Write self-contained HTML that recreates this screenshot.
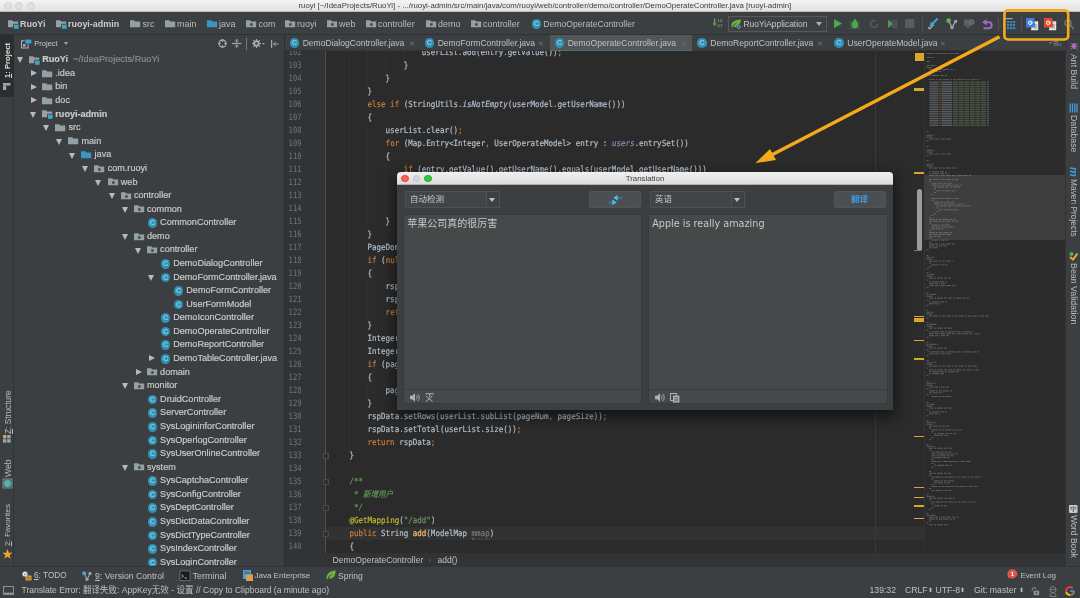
<!DOCTYPE html><html lang="zh"><head><meta charset="utf-8"><title>ruoyi</title><style>
*{box-sizing:border-box;margin:0;padding:0}
html,body{width:1080px;height:598px;overflow:hidden;background:#2b2b2b}
body{position:relative;font-family:"Liberation Sans","Noto Sans CJK SC",sans-serif;font-size:8.6px;color:#bbbbbb}
.abs,.abs>*{position:absolute}
#wrap{left:0;top:0;width:1080px;height:598px;overflow:hidden;will-change:transform}
svg{position:absolute;overflow:visible}
#title{left:0;top:0;width:1080px;height:12px;background:linear-gradient(#f4f4f4,#e2e2e2);border-bottom:1px solid #bdbdbd}
#title .tl{top:2px;width:8px;height:8px;border-radius:50%;background:#e0e0e0;border:0.5px solid #d3d3d3}
#title .t{left:298.5px;top:1px;font-size:7.82px;line-height:10px;color:#404040;white-space:nowrap}
#nav{left:0;top:12px;width:1080px;height:23px;background:#3c3f41;border-bottom:1px solid #2f3133}
.nv{top:5px;height:14px;line-height:14px;font-size:8.95px;color:#bbbbbb;white-space:nowrap}
.nv b{color:#cccccc}
#lstrip{left:0;top:35px;width:14px;height:531px;background:#3c3f41;border-right:1px solid #323435}
#rstrip{left:1065px;top:35px;width:15px;height:531px;background:#3c3f41;border-left:1px solid #323435}
.vt{white-space:nowrap;color:#bbbbbb;transform-origin:0 0;line-height:10px}
#proj{left:14px;top:35px;width:271px;height:531px;background:#3c3f41;border-right:1px solid #2b2d2e;overflow:hidden}
.row{left:0;height:13.58px;line-height:13.58px;font-size:9.08px;white-space:nowrap;color:#cacaca}
.row>*{position:absolute}
.row .t{top:0;-webkit-text-stroke:0.18px}
.row .g{color:#8c8c8c;margin-left:2.5px;letter-spacing:0.05px}
.ard{width:0;height:0;border-left:3.6px solid transparent;border-right:3.6px solid transparent;border-top:6.2px solid #b9b9b9}
.arr_r{width:0;height:0;border-top:3.6px solid transparent;border-bottom:3.6px solid transparent;border-left:6.2px solid #b9b9b9}
.cic{width:9.6px;height:9.6px;border-radius:50%;background:#3291b4;color:#86d0ea;font-size:7.4px;line-height:9.8px;text-align:center;font-weight:bold}
#tabs{left:285px;top:35px;width:780px;height:16px;background:#3c3f41;border-bottom:1px solid #323435}
.tab{top:0;height:15.5px;line-height:16px;font-size:8.55px;color:#c0c0c0;white-space:nowrap}
.tab>*{position:absolute}
.tab.act{background:#515658;border-bottom:1px solid #4c6f7a}
.tab .x{color:#6f7274;font-size:7px;top:0.5px}
#editor{left:285px;top:51px;width:780px;height:502px;background:#2b2b2b;overflow:hidden}
#gutter{left:0;top:0;width:41px;height:502px;background:#313335;border-right:1px solid #4f5254}
.ln{left:3.6px;font-family:"DejaVu Sans Mono","Liberation Mono","Noto Sans CJK SC",monospace;font-size:7.15px;color:#73777a;height:13px;line-height:13px;transform:scaleY(1.22);transform-origin:0 55%}
.cl{left:46.3px;font-family:"DejaVu Sans Mono","Liberation Mono","Noto Sans CJK SC",monospace;font-size:7.52px;color:#b4c0cc;height:13px;line-height:13px;white-space:pre;-webkit-text-stroke:0.15px;transform:scaleY(1.12);transform-origin:0 55%}
.k{color:#d07f37}.m{color:#ffc66d}.a{color:#c4bd31}.s{color:#75966a}.c{color:#629755;font-style:italic}.f{color:#a580b8;font-style:italic}.i{font-style:italic}
.p{color:#7c7c7c;border-bottom:0.6px dotted #5a5a5a}
#crumbs{left:285px;top:552.6px;width:780px;height:14px;background:#313335;font-size:8.55px;line-height:15.6px;color:#c0c0c0;white-space:nowrap}
#tools{left:0;top:566px;width:1080px;height:17px;background:#3c3f41;border-top:1px solid #323435}
.tw{top:1.5px;height:14px;line-height:14px;color:#c0c0c0;white-space:nowrap}
#status{left:0;top:583px;width:1080px;height:15px;background:#3c3f41;font-size:8.6px;line-height:15px;color:#c0c0c0;white-space:nowrap}
#dlgsh{left:397px;top:172px;width:496px;height:237.6px;border-radius:4px 4px 0 0;box-shadow:0 5px 14px 2px rgba(0,0,0,.55)}
#dlg{left:397px;top:172px;width:496px;height:237.6px;background:#3c3f41;border-radius:4px 4px 0 0;overflow:hidden}
#dtitle{left:0;top:0;width:496px;height:13px;background:linear-gradient(#f0f0f0,#dcdcdc);border-bottom:1px solid #b0b0b0}
#dtitle .tt{left:0;width:496px;top:0;text-align:center;font-size:7.9px;line-height:13.4px;color:#3c3c3c}
.dot{top:2.5px;width:7.5px;height:7.5px;border-radius:50%}
.combo{height:17.3px;background:#414547;border:1px solid #4d5153;font-size:8.5px;line-height:15.3px;color:#c8c8c8;white-space:nowrap}
.combo>*{position:absolute}
.btn{height:17.3px;border-radius:2px;background:#4b4f51;border:1px solid #505456;font-size:8.5px;line-height:15.3px;color:#3d9be4;text-align:center;font-weight:bold}
.ta{background:#45494a;border:1px solid #383b3d;color:#c8c8c8;white-space:nowrap}
.ta>*{position:absolute}
</style></head><body><div id="wrap" class="abs">
<div id="title" class="abs">
<div class="tl" style="left:4px"></div>
<div class="tl" style="left:15px"></div>
<div class="tl" style="left:26.5px"></div>
<div class="t">ruoyi [~/IdeaProjects/RuoYi] - .../ruoyi-admin/src/main/java/com/ruoyi/web/controller/demo/controller/DemoOperateController.java [ruoyi-admin]</div>
</div>
<div id="nav" class="abs">
<svg style="left:7.50px;top:7.50px" width="10.6" height="9" viewBox="0 0 10.6 9"><path d="M0 0.3h4.2l1 1.2H10.2V7.3H0z" fill="#94a0a7"/><rect x="5.2" y="3.8" width="5.4" height="5" fill="#3c3f41"/><rect x="6" y="4.6" width="4.6" height="4.2" fill="#3ea4cc"/></svg>
<div class="nv" style="left:20px"><b>RuoYi</b></div>
<svg style="left:55.50px;top:7.50px" width="10.6" height="9" viewBox="0 0 10.6 9"><path d="M0 0.3h4.2l1 1.2H10.2V7.3H0z" fill="#94a0a7"/><rect x="5.2" y="3.8" width="5.4" height="5" fill="#3c3f41"/><rect x="6" y="4.6" width="4.6" height="4.2" fill="#3ea4cc"/></svg>
<div class="nv" style="left:68px"><b>ruoyi-admin</b></div>
<svg style="left:130.00px;top:7.50px" width="10.6" height="9" viewBox="0 0 10.6 9"><path d="M0 0.3h4.2l1 1.2H10.2V7.3H0z" fill="#94a0a7"/></svg>
<div class="nv" style="left:142.5px">src</div>
<svg style="left:164.50px;top:7.50px" width="10.6" height="9" viewBox="0 0 10.6 9"><path d="M0 0.3h4.2l1 1.2H10.2V7.3H0z" fill="#94a0a7"/></svg>
<div class="nv" style="left:177px">main</div>
<svg style="left:207.00px;top:7.50px" width="10.6" height="9" viewBox="0 0 10.6 9"><path d="M0 0.3h4.2l1 1.2H10.2V7.3H0z" fill="#3c93c4"/></svg>
<div class="nv" style="left:219px">java</div>
<svg style="left:246.00px;top:7.50px" width="10.6" height="9" viewBox="0 0 10.6 9"><path d="M0 0.3h4.2l1 1.2H10.2V7.3H0z" fill="#94a0a7"/><rect x="4.2" y="3.3" width="2.4" height="2.4" fill="#3c3f41"/></svg>
<div class="nv" style="left:258.5px">com</div>
<svg style="left:285.00px;top:7.50px" width="10.6" height="9" viewBox="0 0 10.6 9"><path d="M0 0.3h4.2l1 1.2H10.2V7.3H0z" fill="#94a0a7"/><rect x="4.2" y="3.3" width="2.4" height="2.4" fill="#3c3f41"/></svg>
<div class="nv" style="left:297px">ruoyi</div>
<svg style="left:326.50px;top:7.50px" width="10.6" height="9" viewBox="0 0 10.6 9"><path d="M0 0.3h4.2l1 1.2H10.2V7.3H0z" fill="#94a0a7"/><rect x="4.2" y="3.3" width="2.4" height="2.4" fill="#3c3f41"/></svg>
<div class="nv" style="left:339px">web</div>
<svg style="left:366.00px;top:7.50px" width="10.6" height="9" viewBox="0 0 10.6 9"><path d="M0 0.3h4.2l1 1.2H10.2V7.3H0z" fill="#94a0a7"/><rect x="4.2" y="3.3" width="2.4" height="2.4" fill="#3c3f41"/></svg>
<div class="nv" style="left:378px">controller</div>
<svg style="left:426.00px;top:7.50px" width="10.6" height="9" viewBox="0 0 10.6 9"><path d="M0 0.3h4.2l1 1.2H10.2V7.3H0z" fill="#94a0a7"/><rect x="4.2" y="3.3" width="2.4" height="2.4" fill="#3c3f41"/></svg>
<div class="nv" style="left:438px">demo</div>
<svg style="left:471.00px;top:7.50px" width="10.6" height="9" viewBox="0 0 10.6 9"><path d="M0 0.3h4.2l1 1.2H10.2V7.3H0z" fill="#94a0a7"/><rect x="4.2" y="3.3" width="2.4" height="2.4" fill="#3c3f41"/></svg>
<div class="nv" style="left:483px">controller</div>
<div class="cic" style="left:531.50px;top:7.00px">C</div>
<div class="nv" style="left:543.3px;font-size:8.65px">DemoOperateController</div>
<svg style="left:712.00px;top:5.50px" width="12" height="13" viewBox="0 0 12 13"><path d="M2.6 0.5v6" stroke="#57a64a" stroke-width="1.4"/><path d="M0.6 5.2l2 3 2-3z" fill="#57a64a"/><text x="5.6" y="4.4" font-size="4.4" fill="#a8a8a8" font-family="Liberation Sans,sans-serif">10</text><text x="5.6" y="9.4" font-size="4.4" fill="#a8a8a8" font-family="Liberation Sans,sans-serif">01</text></svg>
<div style="left:727.5px;top:3.8px;width:99.5px;height:16px;border:1px solid #56595b;background:#3e4143"></div>
<svg style="left:730.50px;top:6.50px" width="11" height="10" viewBox="0 0 11 10"><path d="M0.5 7C0.5 3 3.5 1 9.8 0.5 9.8 5 7 8.5 2.5 8 3.5 5.5 5.5 4 7.5 3 4.5 3.8 2.2 5.5 1.2 8.8z" fill="#6db33f"/><circle cx="7.8" cy="7.8" r="2.3" fill="#3e4143"/><circle cx="7.8" cy="7.8" r="1.6" fill="none" stroke="#7fb0d8" stroke-width="0.9"/></svg>
<div class="nv" style="left:743.5px;top:4.8px;font-size:8.45px;color:#c6c6c6">RuoYiApplication</div>
<div class="ard" style="left:815.5px;top:9.8px;border-left-width:3px;border-right-width:3px;border-top:4.2px solid #b0b0b0"></div>
<svg style="left:833.70px;top:7.30px" width="9" height="10" viewBox="0 0 9 10"><path d="M0 0L8.2 4.6 0 9.2z" fill="#49a84c"/></svg>
<svg style="left:849.50px;top:6.50px" width="11" height="11" viewBox="0 0 11 11"><ellipse cx="5" cy="5.8" rx="3.1" ry="3.8" fill="#49a84c"/><circle cx="5" cy="2" r="1.7" fill="#49a84c"/><path d="M0.3 3.5l2 1M9.7 3.5l-2 1M0 6.2h2M10 6.2h-2M0.5 9.3l2-1.2M9.5 9.3l-2-1.2" stroke="#49a84c" stroke-width="0.9"/><path d="M8.2 3.8l2.3 1.6-2.3 1.6z" fill="#3c3f41"/></svg>
<svg style="left:869.00px;top:6.80px" width="10" height="10" viewBox="0 0 10 10"><path d="M8.3 5A3.4 3.4 0 1 1 5 1.6" fill="none" stroke="#55585a" stroke-width="1.7"/><path d="M4.5 0L7.2 1.7 4.5 3.6z" fill="#55585a"/></svg>
<svg style="left:886.50px;top:6.80px" width="11" height="10" viewBox="0 0 11 10"><path d="M1 0.5L6.5 4.7 1 9z" fill="#4a9a55"/><path d="M5 0.8h5.2v8.2H5z" fill="#5b5e60" opacity=".85"/><path d="M5 2.5h5M5 4.7h5M5 6.9h5M7.5 0.8v8.2" stroke="#3c3f41" stroke-width=".5"/></svg>
<svg style="left:905.20px;top:7.00px" width="10" height="10" viewBox="0 0 10 10"><rect x="0" y="0" width="9.3" height="9" fill="#595c5e"/></svg>
<div style="left:921.5px;top:4.5px;width:1px;height:14px;background:#4e5254"></div>
<svg style="left:927.00px;top:5.50px" width="12" height="13" viewBox="0 0 12 13"><path d="M10.5 0.5L5.2 6.2" stroke="#3f9fd8" stroke-width="2.2"/><path d="M2.2 8.8L4 3.8 8 7.4z" fill="#3f9fd8"/><path d="M1 9.2l1.6 1.8L5.5 8" stroke="#b8b8b8" stroke-width="1.1" fill="none"/></svg>
<svg style="left:945.50px;top:5.50px" width="12" height="12" viewBox="0 0 12 12"><path d="M2.6 2.6L6 9.3 9.6 3.4" stroke="#b0b0b0" stroke-width="1.1" fill="none"/><circle cx="2.6" cy="2.6" r="2.3" fill="#62b543"/><circle cx="9.6" cy="3.4" r="1.7" fill="#9a9da0"/><circle cx="6" cy="9.6" r="1.8" fill="#9a9da0"/></svg>
<svg style="left:963.50px;top:6.50px" width="11" height="11" viewBox="0 0 11 11"><rect x="0" y="0.5" width="8" height="6.3" fill="#5c5f61"/><rect x="2.5" y="7.2" width="3" height="1.8" fill="#5c5f61"/><circle cx="7.8" cy="3" r="2.8" fill="#6a6d6f"/><path d="M7.8 1.6v1.6h1.3" stroke="#3c3f41" stroke-width=".7" fill="none"/></svg>
<svg style="left:981.50px;top:6.50px" width="11" height="11" viewBox="0 0 11 11"><path d="M3.5 3.3h3.2a3 3 0 0 1 0 6H1.5" fill="none" stroke="#9a6bc7" stroke-width="1.9"/><path d="M4.6 0L0.2 3.3 4.6 6.6z" fill="#9a6bc7"/></svg>
<div style="left:998px;top:4.5px;width:1px;height:14px;background:#4e5254"></div>
<svg style="left:1004.00px;top:5.50px" width="12" height="12" viewBox="0 0 12 12"><path d="M0.6 8.5V0.6h8" stroke="#9aa0a4" stroke-width="1.1" fill="none"/><rect x="2.6" y="2.6" width="8.8" height="8.8" fill="#3c3f41"/><g fill="#3b86b8"><rect x="3" y="3" width="2.2" height="2.2"/><rect x="6" y="3" width="2.2" height="2.2"/><rect x="9" y="3" width="2.2" height="2.2"/><rect x="3" y="6" width="2.2" height="2.2"/><rect x="6" y="6" width="2.2" height="2.2"/><rect x="9" y="6" width="2.2" height="2.2"/><rect x="3" y="9" width="2.2" height="2.2"/><rect x="6" y="9" width="2.2" height="2.2"/><rect x="9" y="9" width="2.2" height="2.2"/></g></svg>
<div style="left:1021px;top:4.5px;width:1px;height:14px;background:#4e5254"></div>
<svg style="left:1026.00px;top:5.60px" width="12.5" height="12.5" viewBox="0 0 12.5 12.5"><path d="M6 3.2h6.2v9H5z" fill="#e6e6e6"/><path d="M8.2 7h3M9.7 6v1M8.4 10.8c1.2-.6 2-1.8 2.2-3.4M8.6 8.4c.5 1 1.3 1.8 2.4 2.2" stroke="#8a8a8a" stroke-width=".6" fill="none"/><path d="M0.8 0h7.4l1.2 9.6H0.8a.8.8 0 0 1-.8-.8V.8A.8.8 0 0 1 .8 0z" fill="#3f7fe0"/><circle cx="4.3" cy="4.8" r="1.8" fill="none" stroke="#ffffff" stroke-width="1"/><path d="M4.3 4.8h2" stroke="#fff" stroke-width=".9"/></svg>
<svg style="left:1044.30px;top:5.60px" width="12.5" height="12.5" viewBox="0 0 12.5 12.5"><path d="M6 3.2h6.2v9H5z" fill="#e6e6e6"/><path d="M8.2 7h3M9.7 6v1M8.4 10.8c1.2-.6 2-1.8 2.2-3.4M8.6 8.4c.5 1 1.3 1.8 2.4 2.2" stroke="#8a8a8a" stroke-width=".6" fill="none"/><path d="M0.8 0h7.4l1.2 9.6H0.8a.8.8 0 0 1-.8-.8V.8A.8.8 0 0 1 .8 0z" fill="#e8492e"/><circle cx="4.3" cy="4.8" r="1.8" fill="none" stroke="#ffffff" stroke-width="1"/><path d="M4.3 4.8h2" stroke="#fff" stroke-width=".9"/></svg>
<svg style="left:1063.50px;top:6.50px" width="11" height="11" viewBox="0 0 11 11"><circle cx="4" cy="4" r="3" fill="none" stroke="#6e7173" stroke-width="1.5"/><path d="M6.2 6.2l3.6 3.6" stroke="#6e7173" stroke-width="1.8"/></svg>
</div>
<div id="lstrip" class="abs">
<div style="left:0;top:0;width:13.5px;height:61.5px;background:#2b2d2e"></div>
<div class="vt" style="left:2.6px;top:43px;transform:rotate(-90deg);color:#dcdcdc;font-size:7.7px;font-weight:bold"><u>1</u>: Project</div>
<svg style="left:3.00px;top:48.00px" width="8" height="8" viewBox="0 0 8 8"><rect x="0" y="0" width="7.5" height="2.5" fill="#9aa7b0"/><rect x="0" y="2.5" width="3.2" height="4.5" fill="#9aa7b0"/></svg>
<div class="vt" style="left:2.6px;top:399px;transform:rotate(-90deg);font-size:8.36px"><u>Z</u>: Structure</div>
<svg style="left:2.70px;top:400.00px" width="8" height="8" viewBox="0 0 8 8"><rect x="0" y="0" width="3.4" height="3.4" fill="#d6a544"/><rect x="4.2" y="0" width="3.4" height="3.4" fill="#9aa7b0"/><rect x="0" y="4.2" width="3.4" height="3.4" fill="#9aa7b0"/><rect x="4.2" y="4.2" width="3.4" height="3.4" fill="#9aa7b0"/></svg>
<div class="vt" style="left:2.6px;top:441.5px;transform:rotate(-90deg);font-size:8.6px">Web</div>
<svg style="left:2.50px;top:443.50px" width="9" height="9" viewBox="0 0 9 9"><circle cx="4.5" cy="4.5" r="4" fill="#4a9fd6"/><path d="M2 3c1.5-1.5 4-1 4.5.8S4.5 6 3.5 7.5" fill="#6dbb4a"/><rect x="0" y="0" width="9" height="9" fill="none" stroke="#8d9aa2" stroke-width=".8"/></svg>
<div class="vt" style="left:2.6px;top:510.5px;transform:rotate(-90deg);font-size:8.05px"><u>2</u>: Favorites</div>
<div style="left:2px;top:511.5px;font-size:11px;line-height:14px;color:#f4a62c">★</div>
</div>
<div id="rstrip" class="abs">
<div class="vt" style="left:12.6px;top:18.8px;transform:rotate(90deg);font-size:8.75px">Ant Build</div>
<div class="vt" style="left:12.6px;top:79.9px;transform:rotate(90deg);font-size:8.75px">Database</div>
<div class="vt" style="left:12.6px;top:143.6px;transform:rotate(90deg);font-size:8.4px">Maven Projects</div>
<div class="vt" style="left:12.6px;top:227.6px;transform:rotate(90deg);font-size:8.85px">Bean Validation</div>
<div class="vt" style="left:12.6px;top:480px;transform:rotate(90deg);font-size:8.7px">Word Book</div>
<svg style="left:3.50px;top:6.00px" width="8" height="9" viewBox="0 0 8 9"><ellipse cx="4" cy="5" rx="2" ry="3" fill="#b06bb8"/><path d="M0.5 2.5l2 1.5M7.5 2.5l-2 1.5M0 5.5h2M8 5.5H6M0.5 8.5l2-1.5M7.5 8.5l-2-1.5" stroke="#b06bb8" stroke-width=".8"/></svg>
<svg style="left:3.00px;top:67.50px" width="9" height="10" viewBox="0 0 9 10"><g fill="none" stroke="#3f9ed8" stroke-width="1.3"><path d="M1.2 0.5v9M3.5 0.5v9M5.8 0.5v9M8 0.5v9"/></g></svg>
<div style="left:2.5px;top:130.5px;font-size:11px;line-height:12px;color:#3f9ed8;font-style:italic;font-weight:bold;transform:rotate(90deg);transform-origin:50%% 50%%">m</div>
<svg style="left:3.00px;top:216.00px" width="9" height="9" viewBox="0 0 9 9"><path d="M1 6l3 2.5 4.5-6" stroke="#e8a93a" stroke-width="2" fill="none"/><circle cx="2.5" cy="3" r="2" fill="#59b04e"/></svg>
<svg style="left:3.20px;top:470.00px" width="8.5" height="8" viewBox="0 0 8.5 8"><rect x="0" y="0" width="8.5" height="8" rx="1" fill="#c9ced2"/><path d="M4.25 0.8v6.4M1.3 2.4h1.8M1.3 4h1.8M5.4 2.4h1.8M5.4 4h1.8" stroke="#3c3f41" stroke-width=".8"/></svg>
</div>
<div id="proj" class="abs">
<svg style="left:7.00px;top:3.50px" width="11" height="10" viewBox="0 0 11 10"><rect x="0.5" y="1.8" width="6.6" height="7.2" fill="none" stroke="#aeb6bb" stroke-width="1"/><rect x="3.6" y="0" width="7" height="5.2" fill="#3c3f41"/><rect x="4.4" y="0.6" width="6" height="4" fill="#3f9ed8"/><rect x="2" y="5.2" width="2.6" height="2.4" fill="#aeb6bb"/></svg>
<div class="nv" style="left:20.3px;top:1.6px;font-size:7.5px;color:#c6c6c6">Project</div>
<div class="ard" style="left:50px;top:7px;border-left-width:2.6px;border-right-width:2.6px;border-top:3.6px solid #a8a8a8"></div>
<svg style="left:203.50px;top:4.00px" width="9" height="9" viewBox="0 0 9 9"><circle cx="4.5" cy="4.5" r="3.5" fill="none" stroke="#a4a8aa" stroke-width="1.3"/><path d="M4.5 0v3M4.5 6v3M0 4.5h3M6 4.5h3" stroke="#a4a8aa" stroke-width="1.1"/></svg>
<svg style="left:218.00px;top:4.00px" width="10" height="9" viewBox="0 0 10 9"><path d="M0 4.5h9.4" stroke="#a4a8aa" stroke-width="1.2"/><path d="M4.7 0v2.8M4.7 6.2V9M3 1.5l1.7 1.7 1.7-1.7M3 7.5l1.7-1.7 1.7 1.7" stroke="#a4a8aa" stroke-width="1" fill="none"/></svg>
<div style="left:232.3px;top:2.5px;width:1.2px;height:12px;background:#76797b"></div>
<svg style="left:237.50px;top:4.00px" width="13" height="9" viewBox="0 0 13 9"><circle cx="4.5" cy="4.5" r="2.3" fill="none" stroke="#a4a8aa" stroke-width="2"/><path d="M4.5 0v9M0 4.5h9M1.3 1.3l6.4 6.4M7.7 1.3L1.3 7.7" stroke="#a4a8aa" stroke-width="1.2"/><circle cx="4.5" cy="4.5" r="1.2" fill="#3c3f41"/><path d="M10 4h3l-1.5 1.8z" fill="#a4a8aa"/></svg>
<svg style="left:256.50px;top:4.50px" width="8" height="8" viewBox="0 0 8 8"><path d="M0.6 0v8" stroke="#a4a8aa" stroke-width="1.2"/><path d="M2.5 4h5M4.6 2L2.5 4l2.1 2" stroke="#a4a8aa" stroke-width="1" fill="none"/></svg>
<div class="row" style="top:18.30px">
<div class="ard" style="left:2.8px;top:4.2px"></div>
<svg style="left:14.90px;top:2.70px" width="10.6" height="9" viewBox="0 0 10.6 9"><path d="M0 0.3h4.2l1 1.2H10.2V7.3H0z" fill="#94a0a7"/><rect x="5.2" y="3.8" width="5.4" height="5" fill="#3c3f41"/><rect x="6" y="4.6" width="4.6" height="4.2" fill="#3ea4cc"/></svg>
<span class="t" style="left:28.2px"><b>RuoYi</b> <span class="g">~/IdeaProjects/RuoYi</span></span></div>
<div class="row" style="top:31.88px">
<div class="arr_r" style="left:16.9px;top:3.2px"></div>
<svg style="left:28.00px;top:2.70px" width="10.6" height="9" viewBox="0 0 10.6 9"><path d="M0 0.3h4.2l1 1.2H10.2V7.3H0z" fill="#94a0a7"/></svg>
<span class="t" style="left:41.3px">.idea</span></div>
<div class="row" style="top:45.46px">
<div class="arr_r" style="left:16.9px;top:3.2px"></div>
<svg style="left:28.00px;top:2.70px" width="10.6" height="9" viewBox="0 0 10.6 9"><path d="M0 0.3h4.2l1 1.2H10.2V7.3H0z" fill="#94a0a7"/></svg>
<span class="t" style="left:41.3px">bin</span></div>
<div class="row" style="top:59.04px">
<div class="arr_r" style="left:16.9px;top:3.2px"></div>
<svg style="left:28.00px;top:2.70px" width="10.6" height="9" viewBox="0 0 10.6 9"><path d="M0 0.3h4.2l1 1.2H10.2V7.3H0z" fill="#94a0a7"/></svg>
<span class="t" style="left:41.3px">doc</span></div>
<div class="row" style="top:72.62px">
<div class="ard" style="left:15.9px;top:4.2px"></div>
<svg style="left:28.00px;top:2.70px" width="10.6" height="9" viewBox="0 0 10.6 9"><path d="M0 0.3h4.2l1 1.2H10.2V7.3H0z" fill="#94a0a7"/><rect x="5.2" y="3.8" width="5.4" height="5" fill="#3c3f41"/><rect x="6" y="4.6" width="4.6" height="4.2" fill="#3ea4cc"/></svg>
<span class="t" style="left:41.3px"><b>ruoyi-admin</b></span></div>
<div class="row" style="top:86.20px">
<div class="ard" style="left:29.0px;top:4.2px"></div>
<svg style="left:41.10px;top:2.70px" width="10.6" height="9" viewBox="0 0 10.6 9"><path d="M0 0.3h4.2l1 1.2H10.2V7.3H0z" fill="#94a0a7"/></svg>
<span class="t" style="left:54.4px">src</span></div>
<div class="row" style="top:99.78px">
<div class="ard" style="left:42.1px;top:4.2px"></div>
<svg style="left:54.20px;top:2.70px" width="10.6" height="9" viewBox="0 0 10.6 9"><path d="M0 0.3h4.2l1 1.2H10.2V7.3H0z" fill="#94a0a7"/></svg>
<span class="t" style="left:67.5px">main</span></div>
<div class="row" style="top:113.36px">
<div class="ard" style="left:55.2px;top:4.2px"></div>
<svg style="left:67.30px;top:2.70px" width="10.6" height="9" viewBox="0 0 10.6 9"><path d="M0 0.3h4.2l1 1.2H10.2V7.3H0z" fill="#3c93c4"/></svg>
<span class="t" style="left:80.6px">java</span></div>
<div class="row" style="top:126.94px">
<div class="ard" style="left:68.3px;top:4.2px"></div>
<svg style="left:80.40px;top:2.70px" width="10.6" height="9" viewBox="0 0 10.6 9"><path d="M0 0.3h4.2l1 1.2H10.2V7.3H0z" fill="#94a0a7"/><rect x="4.2" y="3.3" width="2.4" height="2.4" fill="#3c3f41"/></svg>
<span class="t" style="left:93.7px">com.ruoyi</span></div>
<div class="row" style="top:140.52px">
<div class="ard" style="left:81.4px;top:4.2px"></div>
<svg style="left:93.50px;top:2.70px" width="10.6" height="9" viewBox="0 0 10.6 9"><path d="M0 0.3h4.2l1 1.2H10.2V7.3H0z" fill="#94a0a7"/><rect x="4.2" y="3.3" width="2.4" height="2.4" fill="#3c3f41"/></svg>
<span class="t" style="left:106.8px">web</span></div>
<div class="row" style="top:154.10px">
<div class="ard" style="left:94.5px;top:4.2px"></div>
<svg style="left:106.60px;top:2.70px" width="10.6" height="9" viewBox="0 0 10.6 9"><path d="M0 0.3h4.2l1 1.2H10.2V7.3H0z" fill="#94a0a7"/><rect x="4.2" y="3.3" width="2.4" height="2.4" fill="#3c3f41"/></svg>
<span class="t" style="left:119.9px">controller</span></div>
<div class="row" style="top:167.68px">
<div class="ard" style="left:107.6px;top:4.2px"></div>
<svg style="left:119.70px;top:2.70px" width="10.6" height="9" viewBox="0 0 10.6 9"><path d="M0 0.3h4.2l1 1.2H10.2V7.3H0z" fill="#94a0a7"/><rect x="4.2" y="3.3" width="2.4" height="2.4" fill="#3c3f41"/></svg>
<span class="t" style="left:133.0px">common</span></div>
<div class="row" style="top:181.26px">
<div class="cic" style="left:133.70px;top:2.00px">C</div>
<span class="t" style="left:146.1px">CommonController</span></div>
<div class="row" style="top:194.84px">
<div class="ard" style="left:107.6px;top:4.2px"></div>
<svg style="left:119.70px;top:2.70px" width="10.6" height="9" viewBox="0 0 10.6 9"><path d="M0 0.3h4.2l1 1.2H10.2V7.3H0z" fill="#94a0a7"/><rect x="4.2" y="3.3" width="2.4" height="2.4" fill="#3c3f41"/></svg>
<span class="t" style="left:133.0px">demo</span></div>
<div class="row" style="top:208.42px">
<div class="ard" style="left:120.7px;top:4.2px"></div>
<svg style="left:132.80px;top:2.70px" width="10.6" height="9" viewBox="0 0 10.6 9"><path d="M0 0.3h4.2l1 1.2H10.2V7.3H0z" fill="#94a0a7"/><rect x="4.2" y="3.3" width="2.4" height="2.4" fill="#3c3f41"/></svg>
<span class="t" style="left:146.1px">controller</span></div>
<div class="row" style="top:222.00px">
<div class="cic" style="left:146.80px;top:2.00px">C</div>
<span class="t" style="left:159.2px">DemoDialogController</span></div>
<div class="row" style="top:235.58px">
<div class="ard" style="left:133.8px;top:4.2px"></div>
<div class="cic" style="left:146.80px;top:2.00px">C</div>
<span class="t" style="left:159.2px">DemoFormController.java</span></div>
<div class="row" style="top:249.16px">
<div class="cic" style="left:159.90px;top:2.00px">C</div>
<span class="t" style="left:172.3px">DemoFormController</span></div>
<div class="row" style="top:262.74px">
<div class="cic" style="left:159.90px;top:2.00px">C</div>
<span class="t" style="left:172.3px">UserFormModel</span></div>
<div class="row" style="top:276.32px">
<div class="cic" style="left:146.80px;top:2.00px">C</div>
<span class="t" style="left:159.2px">DemoIconController</span></div>
<div class="row" style="top:289.90px">
<div class="cic" style="left:146.80px;top:2.00px">C</div>
<span class="t" style="left:159.2px">DemoOperateController</span></div>
<div class="row" style="top:303.48px">
<div class="cic" style="left:146.80px;top:2.00px">C</div>
<span class="t" style="left:159.2px">DemoReportController</span></div>
<div class="row" style="top:317.06px">
<div class="arr_r" style="left:134.8px;top:3.2px"></div>
<div class="cic" style="left:146.80px;top:2.00px">C</div>
<span class="t" style="left:159.2px">DemoTableController.java</span></div>
<div class="row" style="top:330.64px">
<div class="arr_r" style="left:121.7px;top:3.2px"></div>
<svg style="left:132.80px;top:2.70px" width="10.6" height="9" viewBox="0 0 10.6 9"><path d="M0 0.3h4.2l1 1.2H10.2V7.3H0z" fill="#94a0a7"/><rect x="4.2" y="3.3" width="2.4" height="2.4" fill="#3c3f41"/></svg>
<span class="t" style="left:146.1px">domain</span></div>
<div class="row" style="top:344.22px">
<div class="ard" style="left:107.6px;top:4.2px"></div>
<svg style="left:119.70px;top:2.70px" width="10.6" height="9" viewBox="0 0 10.6 9"><path d="M0 0.3h4.2l1 1.2H10.2V7.3H0z" fill="#94a0a7"/><rect x="4.2" y="3.3" width="2.4" height="2.4" fill="#3c3f41"/></svg>
<span class="t" style="left:133.0px">monitor</span></div>
<div class="row" style="top:357.80px">
<div class="cic" style="left:133.70px;top:2.00px">C</div>
<span class="t" style="left:146.1px">DruidController</span></div>
<div class="row" style="top:371.38px">
<div class="cic" style="left:133.70px;top:2.00px">C</div>
<span class="t" style="left:146.1px">ServerController</span></div>
<div class="row" style="top:384.96px">
<div class="cic" style="left:133.70px;top:2.00px">C</div>
<span class="t" style="left:146.1px">SysLogininforController</span></div>
<div class="row" style="top:398.54px">
<div class="cic" style="left:133.70px;top:2.00px">C</div>
<span class="t" style="left:146.1px">SysOperlogController</span></div>
<div class="row" style="top:412.12px">
<div class="cic" style="left:133.70px;top:2.00px">C</div>
<span class="t" style="left:146.1px">SysUserOnlineController</span></div>
<div class="row" style="top:425.70px">
<div class="ard" style="left:107.6px;top:4.2px"></div>
<svg style="left:119.70px;top:2.70px" width="10.6" height="9" viewBox="0 0 10.6 9"><path d="M0 0.3h4.2l1 1.2H10.2V7.3H0z" fill="#94a0a7"/><rect x="4.2" y="3.3" width="2.4" height="2.4" fill="#3c3f41"/></svg>
<span class="t" style="left:133.0px">system</span></div>
<div class="row" style="top:439.28px">
<div class="cic" style="left:133.70px;top:2.00px">C</div>
<span class="t" style="left:146.1px">SysCaptchaController</span></div>
<div class="row" style="top:452.86px">
<div class="cic" style="left:133.70px;top:2.00px">C</div>
<span class="t" style="left:146.1px">SysConfigController</span></div>
<div class="row" style="top:466.44px">
<div class="cic" style="left:133.70px;top:2.00px">C</div>
<span class="t" style="left:146.1px">SysDeptController</span></div>
<div class="row" style="top:480.02px">
<div class="cic" style="left:133.70px;top:2.00px">C</div>
<span class="t" style="left:146.1px">SysDictDataController</span></div>
<div class="row" style="top:493.60px">
<div class="cic" style="left:133.70px;top:2.00px">C</div>
<span class="t" style="left:146.1px">SysDictTypeController</span></div>
<div class="row" style="top:507.18px">
<div class="cic" style="left:133.70px;top:2.00px">C</div>
<span class="t" style="left:146.1px">SysIndexController</span></div>
<div class="row" style="top:520.76px">
<div class="cic" style="left:133.70px;top:2.00px">C</div>
<span class="t" style="left:146.1px">SysLoginController</span></div>
</div>
<div id="tabs" class="abs">
<div class="tab" style="left:0px;width:134px"><div class="cic" style="left:4.60px;top:3.20px">C</div><span style="left:17.7px">DemoDialogController.java</span><span class="x" style="left:124.2px">✕</span></div>
<div class="tab" style="left:135px;width:129px"><div class="cic" style="left:4.60px;top:3.20px">C</div><span style="left:17.7px">DemoFormController.java</span><span class="x" style="left:118.3px">✕</span></div>
<div class="tab act" style="left:265px;width:142px"><div class="cic" style="left:4.60px;top:3.20px">C</div><span style="left:17.7px">DemoOperateController.java</span><span class="x" style="left:131.3px">✕</span></div>
<div class="tab" style="left:407.6px;width:134px"><div class="cic" style="left:4.60px;top:3.20px">C</div><span style="left:17.7px">DemoReportController.java</span><span class="x" style="left:124.7px">✕</span></div>
<div class="tab" style="left:544.6px;width:122px"><div class="cic" style="left:4.60px;top:3.20px">C</div><span style="left:17.7px">UserOperateModel.java</span><span class="x" style="left:110.2px">✕</span></div>
<svg style="left:764.00px;top:5.50px" width="12" height="6" viewBox="0 0 12 6"><path d="M0 1.2h3L1.5 3z" fill="#8a8d8f"/><path d="M4.5 0.5h5M4.5 2.3h5M4.5 4.1h5" stroke="#8a8d8f" stroke-width=".8"/><text x="10" y="5" font-size="4" fill="#8a8d8f" font-family="Liberation Sans,sans-serif">4</text></svg>
</div>
<div id="editor" class="abs">
<div id="gutter"></div>
<div style="left:42px;top:476.25px;width:596.5px;height:13.00px;background:#323232"></div>
<div style="left:589.5px;top:0;width:1px;height:502px;background:#383838"></div>
<div style="left:64.3px;top:0.00px;width:1px;height:403.00px;background:#313131"></div>
<div style="left:82.3px;top:0.00px;width:1px;height:39.00px;background:#313131"></div>
<div style="left:100.3px;top:0.00px;width:1px;height:26.00px;background:#313131"></div>
<div style="left:118.3px;top:0.00px;width:1px;height:13.00px;background:#313131"></div>
<div style="left:82.3px;top:73.25px;width:1px;height:104.00px;background:#313131"></div>
<div style="left:100.3px;top:112.25px;width:1px;height:52.00px;background:#313131"></div>
<div style="left:118.3px;top:138.25px;width:1px;height:13.00px;background:#313131"></div>
<div style="left:82.3px;top:229.25px;width:1px;height:39.00px;background:#313131"></div>
<div style="left:82.3px;top:333.25px;width:1px;height:13.00px;background:#313131"></div>
<div style="left:37.5px;top:401.75px;width:6px;height:6px;border:1px solid #46494b;background:#2e3032"></div>
<div style="left:37.5px;top:427.75px;width:6px;height:6px;border:1px solid #46494b;background:#2e3032"></div>
<div style="left:37.5px;top:453.75px;width:6px;height:6px;border:1px solid #46494b;background:#2e3032"></div>
<div style="left:37.5px;top:479.75px;width:6px;height:6px;border:1px solid #46494b;background:#2e3032"></div>
<div class="ln" style="top:-4.75px">102</div>
<div class="cl" style="top:-4.75px">                    userList.add(entry.getValue())<span class="k">;</span></div>
<div class="ln" style="top:8.25px">103</div>
<div class="cl" style="top:8.25px">                }</div>
<div class="ln" style="top:21.25px">104</div>
<div class="cl" style="top:21.25px">            }</div>
<div class="ln" style="top:34.25px">105</div>
<div class="cl" style="top:34.25px">        }</div>
<div class="ln" style="top:47.25px">106</div>
<div class="cl" style="top:47.25px">        <span class="k">else if</span> (StringUtils.<span class="i">isNotEmpty</span>(userModel.getUserName()))</div>
<div class="ln" style="top:60.25px">107</div>
<div class="cl" style="top:60.25px">        {</div>
<div class="ln" style="top:73.25px">108</div>
<div class="cl" style="top:73.25px">            userList.clear()<span class="k">;</span></div>
<div class="ln" style="top:86.25px">109</div>
<div class="cl" style="top:86.25px">            <span class="k">for</span> (Map.Entry&lt;Integer<span class="k">,</span> UserOperateModel&gt; entry : <span class="f">users</span>.entrySet())</div>
<div class="ln" style="top:99.25px">110</div>
<div class="cl" style="top:99.25px">            {</div>
<div class="ln" style="top:112.25px">111</div>
<div class="cl" style="top:112.25px">                <span class="k">if</span> (entry.getValue().getUserName().equals(userModel.getUserName()))</div>
<div class="ln" style="top:125.25px">112</div>
<div class="cl" style="top:125.25px">                {</div>
<div class="ln" style="top:138.25px">113</div>
<div class="cl" style="top:138.25px">                    userList.add(entry.getValue())<span class="k">;</span></div>
<div class="ln" style="top:151.25px">114</div>
<div class="cl" style="top:151.25px">                }</div>
<div class="ln" style="top:164.25px">115</div>
<div class="cl" style="top:164.25px">            }</div>
<div class="ln" style="top:177.25px">116</div>
<div class="cl" style="top:177.25px">        }</div>
<div class="ln" style="top:190.25px">117</div>
<div class="cl" style="top:190.25px">        PageDomain pageDomain = TableSupport.buildPageRequest()<span class="k">;</span></div>
<div class="ln" style="top:203.25px">118</div>
<div class="cl" style="top:203.25px">        <span class="k">if</span> (<span class="k">null</span> == pageDomain.getPageNum() || <span class="k">null</span> == pageDomain.getPageSize())</div>
<div class="ln" style="top:216.25px">119</div>
<div class="cl" style="top:216.25px">        {</div>
<div class="ln" style="top:229.25px">120</div>
<div class="cl" style="top:229.25px">            rspData.setRows(userList)<span class="k">;</span></div>
<div class="ln" style="top:242.25px">121</div>
<div class="cl" style="top:242.25px">            rspData.setTotal(userList.size())<span class="k">;</span></div>
<div class="ln" style="top:255.25px">122</div>
<div class="cl" style="top:255.25px">            <span class="k">return</span> rspData<span class="k">;</span></div>
<div class="ln" style="top:268.25px">123</div>
<div class="cl" style="top:268.25px">        }</div>
<div class="ln" style="top:281.25px">124</div>
<div class="cl" style="top:281.25px">        Integer pageNum = (pageDomain.getPageNum() - 1) * 10<span class="k">;</span></div>
<div class="ln" style="top:294.25px">125</div>
<div class="cl" style="top:294.25px">        Integer pageSize = pageDomain.getPageNum() * 10<span class="k">;</span></div>
<div class="ln" style="top:307.25px">126</div>
<div class="cl" style="top:307.25px">        <span class="k">if</span> (pageSize &gt; userList.size())</div>
<div class="ln" style="top:320.25px">127</div>
<div class="cl" style="top:320.25px">        {</div>
<div class="ln" style="top:333.25px">128</div>
<div class="cl" style="top:333.25px">            pageSize = userList.size()<span class="k">;</span></div>
<div class="ln" style="top:346.25px">129</div>
<div class="cl" style="top:346.25px">        }</div>
<div class="ln" style="top:359.25px">130</div>
<div class="cl" style="top:359.25px">        rspData.setRows(userList.subList(pageNum<span class="k">,</span> pageSize))<span class="k">;</span></div>
<div class="ln" style="top:372.25px">131</div>
<div class="cl" style="top:372.25px">        rspData.setTotal(userList.size())<span class="k">;</span></div>
<div class="ln" style="top:385.25px">132</div>
<div class="cl" style="top:385.25px">        <span class="k">return</span> rspData<span class="k">;</span></div>
<div class="ln" style="top:398.25px">133</div>
<div class="cl" style="top:398.25px">    }</div>
<div class="ln" style="top:411.25px">134</div>
<div class="cl" style="top:411.25px"></div>
<div class="ln" style="top:424.25px">135</div>
<div class="cl" style="top:424.25px">    <span class="c">/**</span></div>
<div class="ln" style="top:437.25px">136</div>
<div class="cl" style="top:437.25px">    <span class="c"> * 新增用户</span></div>
<div class="ln" style="top:450.25px">137</div>
<div class="cl" style="top:450.25px">    <span class="c"> */</span></div>
<div class="ln" style="top:463.25px">138</div>
<div class="cl" style="top:463.25px">    <span class="a">@GetMapping</span>(<span class="s">"/add"</span>)</div>
<div class="ln" style="top:476.25px">139</div>
<div class="cl" style="top:476.25px">    <span class="k">public</span> String <span class="m">add</span>(ModelMap <span class="p">mmap</span>)</div>
<div class="ln" style="top:489.25px">140</div>
<div class="cl" style="top:489.25px">    {</div>
<div style="left:638.5px;top:0;width:1px;height:502px;background:#333435"></div>
<div style="left:630px;top:1.5px;width:8.5px;height:8px;background:#d9a62e"></div>
<div style="left:628.8px;top:36.6px;width:10px;height:3px;background:#d9a62e"></div>
<div style="left:628.8px;top:121.2px;width:10px;height:1.8px;background:#d9a62e"></div>
<div style="left:628.8px;top:264.5px;width:10px;height:1.3px;background:#d9a62e"></div>
<div style="left:628.8px;top:267px;width:10px;height:4px;background:#d9a62e"></div>
<div style="left:628.8px;top:288.6px;width:10px;height:1.6px;background:#d9a62e"></div>
<div style="left:628.8px;top:307px;width:10px;height:1.6px;background:#d9a62e"></div>
<div style="left:628.8px;top:384.5px;width:10px;height:1.6px;background:#d9a62e"></div>
<div style="left:628.8px;top:435.5px;width:10px;height:1.6px;background:#d9a62e"></div>
<div style="left:628.8px;top:445.5px;width:10px;height:1.6px;background:#d9a62e"></div>
<div style="left:628.8px;top:454px;width:10px;height:1.6px;background:#d9a62e"></div>
<div style="left:628.8px;top:466.5px;width:10px;height:1.6px;background:#d9a62e"></div>
<div style="left:631.5px;top:138.3px;width:5.5px;height:62px;border-radius:2.7px;background:#9c9c9c"></div>
<div style="left:628.5px;top:198.5px;width:6px;height:1.3px;background:#4e9a4e"></div>
<div style="left:639px;top:124px;width:141px;height:64.5px;background:#3e3e3e"></div>
<svg style="left:0;top:0" width="780" height="502" viewBox="285 51 780 502"><path d="M926.5 53.4h32.3" stroke="#a4a9ad" stroke-width="0.8" stroke-dasharray="6 1 2 1 3 1" opacity="0.55"/><path d="M926.5 57.4h8.5" stroke="#a4a9ad" stroke-width="0.8" stroke-dasharray="4 1 2 1 6 1 3 1" opacity="0.55"/><path d="M926.5 61.4h3.4" stroke="#a4a9ad" stroke-width="0.8" opacity="0.55"/><path d="M926.5 65.4h10.2" stroke="#a4a9ad" stroke-width="0.8" stroke-dasharray="3 1 5 1 2 1" opacity="0.55"/><path d="M926.5 67.4h5.1" stroke="#a4a9ad" stroke-width="0.8" opacity="0.55"/><path d="M928.9 69.4h25.5" stroke="#a4a9ad" stroke-width="0.8" stroke-dasharray="6 1 2 1 3 1" opacity="0.55"/><path d="M928.9 71.4h13.6" stroke="#a4a9ad" stroke-width="0.8" stroke-dasharray="3 1 5 1 2 1" opacity="0.55"/><path d="M928.9 75.4h18.7" stroke="#a4a9ad" stroke-width="0.8" stroke-dasharray="2 1 7 1 4 1" opacity="0.55"/><path d="M928.9 79.4h51.0" stroke="#8a8d90" stroke-width="0.8" stroke-dasharray="6 1 2 1 3 1" opacity="0.55"/><path d="M929.5 82.2h9.0" stroke="#8e9aa6" stroke-width="1.3" opacity="0.48"/><path d="M939.5 82.2h1.2" stroke="#b9773a" stroke-width="1.3" opacity="0.6"/><path d="M941.5 82.2h10.5" stroke="#8e9aa6" stroke-width="1.3" opacity="0.5"/><path d="M953.0 82.2h4.9" stroke="#74865c" stroke-width="1.3" opacity="0.5"/><path d="M958.6 82.2h4.9" stroke="#74865c" stroke-width="1.3" opacity="0.5"/><path d="M964.2 82.2h4.9" stroke="#74865c" stroke-width="1.3" opacity="0.5"/><path d="M969.8 82.2h4.9" stroke="#74865c" stroke-width="1.3" opacity="0.5"/><path d="M975.4 82.2h4.9" stroke="#74865c" stroke-width="1.3" opacity="0.5"/><path d="M981.0 82.2h4.9" stroke="#74865c" stroke-width="1.3" opacity="0.5"/><path d="M986.8 82.2h2.2" stroke="#8e9aa6" stroke-width="1.3" opacity="0.4"/><path d="M929.5 84.4h9.0" stroke="#8e9aa6" stroke-width="1.3" opacity="0.48"/><path d="M939.5 84.4h1.2" stroke="#b9773a" stroke-width="1.3" opacity="0.6"/><path d="M941.5 84.4h10.5" stroke="#8e9aa6" stroke-width="1.3" opacity="0.5"/><path d="M953.0 84.4h4.9" stroke="#74865c" stroke-width="1.3" opacity="0.5"/><path d="M958.6 84.4h4.9" stroke="#74865c" stroke-width="1.3" opacity="0.5"/><path d="M964.2 84.4h4.9" stroke="#74865c" stroke-width="1.3" opacity="0.5"/><path d="M969.8 84.4h4.9" stroke="#74865c" stroke-width="1.3" opacity="0.5"/><path d="M975.4 84.4h4.9" stroke="#74865c" stroke-width="1.3" opacity="0.5"/><path d="M981.0 84.4h4.9" stroke="#74865c" stroke-width="1.3" opacity="0.5"/><path d="M986.8 84.4h2.2" stroke="#8e9aa6" stroke-width="1.3" opacity="0.4"/><path d="M929.5 86.7h9.0" stroke="#8e9aa6" stroke-width="1.3" opacity="0.48"/><path d="M939.5 86.7h1.2" stroke="#b9773a" stroke-width="1.3" opacity="0.6"/><path d="M941.5 86.7h10.5" stroke="#8e9aa6" stroke-width="1.3" opacity="0.5"/><path d="M953.0 86.7h4.9" stroke="#74865c" stroke-width="1.3" opacity="0.5"/><path d="M958.6 86.7h4.9" stroke="#74865c" stroke-width="1.3" opacity="0.5"/><path d="M964.2 86.7h4.9" stroke="#74865c" stroke-width="1.3" opacity="0.5"/><path d="M969.8 86.7h4.9" stroke="#74865c" stroke-width="1.3" opacity="0.5"/><path d="M975.4 86.7h4.9" stroke="#74865c" stroke-width="1.3" opacity="0.5"/><path d="M981.0 86.7h4.9" stroke="#74865c" stroke-width="1.3" opacity="0.5"/><path d="M986.8 86.7h2.2" stroke="#8e9aa6" stroke-width="1.3" opacity="0.4"/><path d="M929.5 89.0h9.0" stroke="#8e9aa6" stroke-width="1.3" opacity="0.48"/><path d="M939.5 89.0h1.2" stroke="#b9773a" stroke-width="1.3" opacity="0.6"/><path d="M941.5 89.0h10.5" stroke="#8e9aa6" stroke-width="1.3" opacity="0.5"/><path d="M953.0 89.0h4.9" stroke="#74865c" stroke-width="1.3" opacity="0.5"/><path d="M958.6 89.0h4.9" stroke="#74865c" stroke-width="1.3" opacity="0.5"/><path d="M964.2 89.0h4.9" stroke="#74865c" stroke-width="1.3" opacity="0.5"/><path d="M969.8 89.0h4.9" stroke="#74865c" stroke-width="1.3" opacity="0.5"/><path d="M975.4 89.0h4.9" stroke="#74865c" stroke-width="1.3" opacity="0.5"/><path d="M981.0 89.0h4.9" stroke="#74865c" stroke-width="1.3" opacity="0.5"/><path d="M986.8 89.0h2.2" stroke="#8e9aa6" stroke-width="1.3" opacity="0.4"/><path d="M929.5 91.2h9.0" stroke="#8e9aa6" stroke-width="1.3" opacity="0.48"/><path d="M939.5 91.2h1.2" stroke="#b9773a" stroke-width="1.3" opacity="0.6"/><path d="M941.5 91.2h10.5" stroke="#8e9aa6" stroke-width="1.3" opacity="0.5"/><path d="M953.0 91.2h4.9" stroke="#74865c" stroke-width="1.3" opacity="0.5"/><path d="M958.6 91.2h4.9" stroke="#74865c" stroke-width="1.3" opacity="0.5"/><path d="M964.2 91.2h4.9" stroke="#74865c" stroke-width="1.3" opacity="0.5"/><path d="M969.8 91.2h4.9" stroke="#74865c" stroke-width="1.3" opacity="0.5"/><path d="M975.4 91.2h4.9" stroke="#74865c" stroke-width="1.3" opacity="0.5"/><path d="M981.0 91.2h4.9" stroke="#74865c" stroke-width="1.3" opacity="0.5"/><path d="M986.8 91.2h2.2" stroke="#8e9aa6" stroke-width="1.3" opacity="0.4"/><path d="M929.5 93.5h9.0" stroke="#8e9aa6" stroke-width="1.3" opacity="0.48"/><path d="M939.5 93.5h1.2" stroke="#b9773a" stroke-width="1.3" opacity="0.6"/><path d="M941.5 93.5h10.5" stroke="#8e9aa6" stroke-width="1.3" opacity="0.5"/><path d="M953.0 93.5h4.9" stroke="#74865c" stroke-width="1.3" opacity="0.5"/><path d="M958.6 93.5h4.9" stroke="#74865c" stroke-width="1.3" opacity="0.5"/><path d="M964.2 93.5h4.9" stroke="#74865c" stroke-width="1.3" opacity="0.5"/><path d="M969.8 93.5h4.9" stroke="#74865c" stroke-width="1.3" opacity="0.5"/><path d="M975.4 93.5h4.9" stroke="#74865c" stroke-width="1.3" opacity="0.5"/><path d="M981.0 93.5h4.9" stroke="#74865c" stroke-width="1.3" opacity="0.5"/><path d="M986.8 93.5h2.2" stroke="#8e9aa6" stroke-width="1.3" opacity="0.4"/><path d="M929.5 95.8h9.0" stroke="#8e9aa6" stroke-width="1.3" opacity="0.48"/><path d="M939.5 95.8h1.2" stroke="#b9773a" stroke-width="1.3" opacity="0.6"/><path d="M941.5 95.8h10.5" stroke="#8e9aa6" stroke-width="1.3" opacity="0.5"/><path d="M953.0 95.8h4.9" stroke="#74865c" stroke-width="1.3" opacity="0.5"/><path d="M958.6 95.8h4.9" stroke="#74865c" stroke-width="1.3" opacity="0.5"/><path d="M964.2 95.8h4.9" stroke="#74865c" stroke-width="1.3" opacity="0.5"/><path d="M969.8 95.8h4.9" stroke="#74865c" stroke-width="1.3" opacity="0.5"/><path d="M975.4 95.8h4.9" stroke="#74865c" stroke-width="1.3" opacity="0.5"/><path d="M981.0 95.8h4.9" stroke="#74865c" stroke-width="1.3" opacity="0.5"/><path d="M986.8 95.8h2.2" stroke="#8e9aa6" stroke-width="1.3" opacity="0.4"/><path d="M929.5 98.0h9.0" stroke="#8e9aa6" stroke-width="1.3" opacity="0.48"/><path d="M939.5 98.0h1.2" stroke="#b9773a" stroke-width="1.3" opacity="0.6"/><path d="M941.5 98.0h10.5" stroke="#8e9aa6" stroke-width="1.3" opacity="0.5"/><path d="M953.0 98.0h4.9" stroke="#74865c" stroke-width="1.3" opacity="0.5"/><path d="M958.6 98.0h4.9" stroke="#74865c" stroke-width="1.3" opacity="0.5"/><path d="M964.2 98.0h4.9" stroke="#74865c" stroke-width="1.3" opacity="0.5"/><path d="M969.8 98.0h4.9" stroke="#74865c" stroke-width="1.3" opacity="0.5"/><path d="M975.4 98.0h4.9" stroke="#74865c" stroke-width="1.3" opacity="0.5"/><path d="M981.0 98.0h4.9" stroke="#74865c" stroke-width="1.3" opacity="0.5"/><path d="M986.8 98.0h2.2" stroke="#8e9aa6" stroke-width="1.3" opacity="0.4"/><path d="M929.5 100.3h9.0" stroke="#8e9aa6" stroke-width="1.3" opacity="0.48"/><path d="M939.5 100.3h1.2" stroke="#b9773a" stroke-width="1.3" opacity="0.6"/><path d="M941.5 100.3h10.5" stroke="#8e9aa6" stroke-width="1.3" opacity="0.5"/><path d="M953.0 100.3h4.9" stroke="#74865c" stroke-width="1.3" opacity="0.5"/><path d="M958.6 100.3h4.9" stroke="#74865c" stroke-width="1.3" opacity="0.5"/><path d="M964.2 100.3h4.9" stroke="#74865c" stroke-width="1.3" opacity="0.5"/><path d="M969.8 100.3h4.9" stroke="#74865c" stroke-width="1.3" opacity="0.5"/><path d="M975.4 100.3h4.9" stroke="#74865c" stroke-width="1.3" opacity="0.5"/><path d="M981.0 100.3h4.9" stroke="#74865c" stroke-width="1.3" opacity="0.5"/><path d="M986.8 100.3h2.2" stroke="#8e9aa6" stroke-width="1.3" opacity="0.4"/><path d="M929.5 102.6h9.0" stroke="#8e9aa6" stroke-width="1.3" opacity="0.48"/><path d="M939.5 102.6h1.2" stroke="#b9773a" stroke-width="1.3" opacity="0.6"/><path d="M941.5 102.6h10.5" stroke="#8e9aa6" stroke-width="1.3" opacity="0.5"/><path d="M953.0 102.6h4.9" stroke="#74865c" stroke-width="1.3" opacity="0.5"/><path d="M958.6 102.6h4.9" stroke="#74865c" stroke-width="1.3" opacity="0.5"/><path d="M964.2 102.6h4.9" stroke="#74865c" stroke-width="1.3" opacity="0.5"/><path d="M969.8 102.6h4.9" stroke="#74865c" stroke-width="1.3" opacity="0.5"/><path d="M975.4 102.6h4.9" stroke="#74865c" stroke-width="1.3" opacity="0.5"/><path d="M981.0 102.6h4.9" stroke="#74865c" stroke-width="1.3" opacity="0.5"/><path d="M986.8 102.6h2.2" stroke="#8e9aa6" stroke-width="1.3" opacity="0.4"/><path d="M929.5 104.8h9.0" stroke="#8e9aa6" stroke-width="1.3" opacity="0.48"/><path d="M939.5 104.8h1.2" stroke="#b9773a" stroke-width="1.3" opacity="0.6"/><path d="M941.5 104.8h10.5" stroke="#8e9aa6" stroke-width="1.3" opacity="0.5"/><path d="M953.0 104.8h4.9" stroke="#74865c" stroke-width="1.3" opacity="0.5"/><path d="M958.6 104.8h4.9" stroke="#74865c" stroke-width="1.3" opacity="0.5"/><path d="M964.2 104.8h4.9" stroke="#74865c" stroke-width="1.3" opacity="0.5"/><path d="M969.8 104.8h4.9" stroke="#74865c" stroke-width="1.3" opacity="0.5"/><path d="M975.4 104.8h4.9" stroke="#74865c" stroke-width="1.3" opacity="0.5"/><path d="M981.0 104.8h4.9" stroke="#74865c" stroke-width="1.3" opacity="0.5"/><path d="M986.8 104.8h2.2" stroke="#8e9aa6" stroke-width="1.3" opacity="0.4"/><path d="M929.5 107.1h9.0" stroke="#8e9aa6" stroke-width="1.3" opacity="0.48"/><path d="M939.5 107.1h1.2" stroke="#b9773a" stroke-width="1.3" opacity="0.6"/><path d="M941.5 107.1h10.5" stroke="#8e9aa6" stroke-width="1.3" opacity="0.5"/><path d="M953.0 107.1h4.9" stroke="#74865c" stroke-width="1.3" opacity="0.5"/><path d="M958.6 107.1h4.9" stroke="#74865c" stroke-width="1.3" opacity="0.5"/><path d="M964.2 107.1h4.9" stroke="#74865c" stroke-width="1.3" opacity="0.5"/><path d="M969.8 107.1h4.9" stroke="#74865c" stroke-width="1.3" opacity="0.5"/><path d="M975.4 107.1h4.9" stroke="#74865c" stroke-width="1.3" opacity="0.5"/><path d="M981.0 107.1h4.9" stroke="#74865c" stroke-width="1.3" opacity="0.5"/><path d="M986.8 107.1h2.2" stroke="#8e9aa6" stroke-width="1.3" opacity="0.4"/><path d="M929.5 109.4h9.0" stroke="#8e9aa6" stroke-width="1.3" opacity="0.48"/><path d="M939.5 109.4h1.2" stroke="#b9773a" stroke-width="1.3" opacity="0.6"/><path d="M941.5 109.4h10.5" stroke="#8e9aa6" stroke-width="1.3" opacity="0.5"/><path d="M953.0 109.4h4.9" stroke="#74865c" stroke-width="1.3" opacity="0.5"/><path d="M958.6 109.4h4.9" stroke="#74865c" stroke-width="1.3" opacity="0.5"/><path d="M964.2 109.4h4.9" stroke="#74865c" stroke-width="1.3" opacity="0.5"/><path d="M969.8 109.4h4.9" stroke="#74865c" stroke-width="1.3" opacity="0.5"/><path d="M975.4 109.4h4.9" stroke="#74865c" stroke-width="1.3" opacity="0.5"/><path d="M981.0 109.4h4.9" stroke="#74865c" stroke-width="1.3" opacity="0.5"/><path d="M986.8 109.4h2.2" stroke="#8e9aa6" stroke-width="1.3" opacity="0.4"/><path d="M929.5 111.7h9.0" stroke="#8e9aa6" stroke-width="1.3" opacity="0.48"/><path d="M939.5 111.7h1.2" stroke="#b9773a" stroke-width="1.3" opacity="0.6"/><path d="M941.5 111.7h10.5" stroke="#8e9aa6" stroke-width="1.3" opacity="0.5"/><path d="M953.0 111.7h4.9" stroke="#74865c" stroke-width="1.3" opacity="0.5"/><path d="M958.6 111.7h4.9" stroke="#74865c" stroke-width="1.3" opacity="0.5"/><path d="M964.2 111.7h4.9" stroke="#74865c" stroke-width="1.3" opacity="0.5"/><path d="M969.8 111.7h4.9" stroke="#74865c" stroke-width="1.3" opacity="0.5"/><path d="M975.4 111.7h4.9" stroke="#74865c" stroke-width="1.3" opacity="0.5"/><path d="M981.0 111.7h4.9" stroke="#74865c" stroke-width="1.3" opacity="0.5"/><path d="M986.8 111.7h2.2" stroke="#8e9aa6" stroke-width="1.3" opacity="0.4"/><path d="M929.5 113.9h9.0" stroke="#8e9aa6" stroke-width="1.3" opacity="0.48"/><path d="M939.5 113.9h1.2" stroke="#b9773a" stroke-width="1.3" opacity="0.6"/><path d="M941.5 113.9h10.5" stroke="#8e9aa6" stroke-width="1.3" opacity="0.5"/><path d="M953.0 113.9h4.9" stroke="#74865c" stroke-width="1.3" opacity="0.5"/><path d="M958.6 113.9h4.9" stroke="#74865c" stroke-width="1.3" opacity="0.5"/><path d="M964.2 113.9h4.9" stroke="#74865c" stroke-width="1.3" opacity="0.5"/><path d="M969.8 113.9h4.9" stroke="#74865c" stroke-width="1.3" opacity="0.5"/><path d="M975.4 113.9h4.9" stroke="#74865c" stroke-width="1.3" opacity="0.5"/><path d="M981.0 113.9h4.9" stroke="#74865c" stroke-width="1.3" opacity="0.5"/><path d="M986.8 113.9h2.2" stroke="#8e9aa6" stroke-width="1.3" opacity="0.4"/><path d="M929.5 116.2h9.0" stroke="#8e9aa6" stroke-width="1.3" opacity="0.48"/><path d="M939.5 116.2h1.2" stroke="#b9773a" stroke-width="1.3" opacity="0.6"/><path d="M941.5 116.2h10.5" stroke="#8e9aa6" stroke-width="1.3" opacity="0.5"/><path d="M953.0 116.2h4.9" stroke="#74865c" stroke-width="1.3" opacity="0.5"/><path d="M958.6 116.2h4.9" stroke="#74865c" stroke-width="1.3" opacity="0.5"/><path d="M964.2 116.2h4.9" stroke="#74865c" stroke-width="1.3" opacity="0.5"/><path d="M969.8 116.2h4.9" stroke="#74865c" stroke-width="1.3" opacity="0.5"/><path d="M975.4 116.2h4.9" stroke="#74865c" stroke-width="1.3" opacity="0.5"/><path d="M981.0 116.2h4.9" stroke="#74865c" stroke-width="1.3" opacity="0.5"/><path d="M986.8 116.2h2.2" stroke="#8e9aa6" stroke-width="1.3" opacity="0.4"/><path d="M929.5 118.5h9.0" stroke="#8e9aa6" stroke-width="1.3" opacity="0.48"/><path d="M939.5 118.5h1.2" stroke="#b9773a" stroke-width="1.3" opacity="0.6"/><path d="M941.5 118.5h10.5" stroke="#8e9aa6" stroke-width="1.3" opacity="0.5"/><path d="M953.0 118.5h4.9" stroke="#74865c" stroke-width="1.3" opacity="0.5"/><path d="M958.6 118.5h4.9" stroke="#74865c" stroke-width="1.3" opacity="0.5"/><path d="M964.2 118.5h4.9" stroke="#74865c" stroke-width="1.3" opacity="0.5"/><path d="M969.8 118.5h4.9" stroke="#74865c" stroke-width="1.3" opacity="0.5"/><path d="M975.4 118.5h4.9" stroke="#74865c" stroke-width="1.3" opacity="0.5"/><path d="M981.0 118.5h4.9" stroke="#74865c" stroke-width="1.3" opacity="0.5"/><path d="M986.8 118.5h2.2" stroke="#8e9aa6" stroke-width="1.3" opacity="0.4"/><path d="M929.5 120.7h9.0" stroke="#8e9aa6" stroke-width="1.3" opacity="0.48"/><path d="M939.5 120.7h1.2" stroke="#b9773a" stroke-width="1.3" opacity="0.6"/><path d="M941.5 120.7h10.5" stroke="#8e9aa6" stroke-width="1.3" opacity="0.5"/><path d="M953.0 120.7h4.9" stroke="#74865c" stroke-width="1.3" opacity="0.5"/><path d="M958.6 120.7h4.9" stroke="#74865c" stroke-width="1.3" opacity="0.5"/><path d="M964.2 120.7h4.9" stroke="#74865c" stroke-width="1.3" opacity="0.5"/><path d="M969.8 120.7h4.9" stroke="#74865c" stroke-width="1.3" opacity="0.5"/><path d="M975.4 120.7h4.9" stroke="#74865c" stroke-width="1.3" opacity="0.5"/><path d="M981.0 120.7h4.9" stroke="#74865c" stroke-width="1.3" opacity="0.5"/><path d="M986.8 120.7h2.2" stroke="#8e9aa6" stroke-width="1.3" opacity="0.4"/><path d="M929.5 123.0h9.0" stroke="#8e9aa6" stroke-width="1.3" opacity="0.48"/><path d="M939.5 123.0h1.2" stroke="#b9773a" stroke-width="1.3" opacity="0.6"/><path d="M941.5 123.0h10.5" stroke="#8e9aa6" stroke-width="1.3" opacity="0.5"/><path d="M953.0 123.0h4.9" stroke="#74865c" stroke-width="1.3" opacity="0.5"/><path d="M958.6 123.0h4.9" stroke="#74865c" stroke-width="1.3" opacity="0.5"/><path d="M964.2 123.0h4.9" stroke="#74865c" stroke-width="1.3" opacity="0.5"/><path d="M969.8 123.0h4.9" stroke="#74865c" stroke-width="1.3" opacity="0.5"/><path d="M975.4 123.0h4.9" stroke="#74865c" stroke-width="1.3" opacity="0.5"/><path d="M981.0 123.0h4.9" stroke="#74865c" stroke-width="1.3" opacity="0.5"/><path d="M986.8 123.0h2.2" stroke="#8e9aa6" stroke-width="1.3" opacity="0.4"/><path d="M929.5 125.3h9.0" stroke="#8e9aa6" stroke-width="1.3" opacity="0.48"/><path d="M939.5 125.3h1.2" stroke="#b9773a" stroke-width="1.3" opacity="0.6"/><path d="M941.5 125.3h10.5" stroke="#8e9aa6" stroke-width="1.3" opacity="0.5"/><path d="M953.0 125.3h4.9" stroke="#74865c" stroke-width="1.3" opacity="0.5"/><path d="M958.6 125.3h4.9" stroke="#74865c" stroke-width="1.3" opacity="0.5"/><path d="M964.2 125.3h4.9" stroke="#74865c" stroke-width="1.3" opacity="0.5"/><path d="M969.8 125.3h4.9" stroke="#74865c" stroke-width="1.3" opacity="0.5"/><path d="M975.4 125.3h4.9" stroke="#74865c" stroke-width="1.3" opacity="0.5"/><path d="M981.0 125.3h4.9" stroke="#74865c" stroke-width="1.3" opacity="0.5"/><path d="M986.8 125.3h2.2" stroke="#8e9aa6" stroke-width="1.3" opacity="0.4"/><path d="M926.5 131.4h2.0" stroke="#a4a9ad" stroke-width="0.8" opacity="0.5"/><path d="M926.5 135.2h8.0" stroke="#a4a9ad" stroke-width="0.8" stroke-dasharray="6 1 2 1 3 1" opacity="0.5"/><path d="M926.5 137.1h6.0" stroke="#a4a9ad" stroke-width="0.8" opacity="0.5"/><path d="M929.0 139.0h22.0" stroke="#a4a9ad" stroke-width="0.8" stroke-dasharray="5 1 3 1 1 1 4 1" opacity="0.5"/><path d="M926.5 140.9h2.0" stroke="#a4a9ad" stroke-width="0.8" opacity="0.5"/><path d="M926.5 146.4h2.0" stroke="#a4a9ad" stroke-width="0.8" opacity="0.5"/><path d="M926.5 150.2h8.0" stroke="#a4a9ad" stroke-width="0.8" stroke-dasharray="6 1 2 1 3 1" opacity="0.5"/><path d="M926.5 152.1h6.0" stroke="#a4a9ad" stroke-width="0.8" opacity="0.5"/><path d="M929.0 154.0h22.0" stroke="#a4a9ad" stroke-width="0.8" stroke-dasharray="5 1 3 1 1 1 4 1" opacity="0.5"/><path d="M926.5 155.9h2.0" stroke="#a4a9ad" stroke-width="0.8" opacity="0.5"/><path d="M926.5 160.4h2.0" stroke="#a4a9ad" stroke-width="0.8" opacity="0.5"/><path d="M926.5 164.2h8.0" stroke="#a4a9ad" stroke-width="0.8" stroke-dasharray="4 1 2 1 6 1 3 1" opacity="0.5"/><path d="M926.5 166.1h6.0" stroke="#a4a9ad" stroke-width="0.8" opacity="0.5"/><path d="M929.0 168.0h28.0" stroke="#a4a9ad" stroke-width="0.8" stroke-dasharray="3 1 5 1 2 1" opacity="0.5"/><path d="M929.0 171.8h18.0" stroke="#a4a9ad" stroke-width="0.8" stroke-dasharray="2 1 7 1 4 1" opacity="0.5"/><path d="M929.0 173.7h20.0" stroke="#a4a9ad" stroke-width="0.8" stroke-dasharray="2 1 7 1 4 1" opacity="0.5"/><path d="M929.0 175.6h42.0" stroke="#a4a9ad" stroke-width="0.8" stroke-dasharray="5 1 3 1 1 1 4 1" opacity="0.5"/><path d="M929.0 179.4h30.0" stroke="#a4a9ad" stroke-width="0.8" stroke-dasharray="3 1 5 1 2 1" opacity="0.5"/><path d="M929.0 181.3h2.0" stroke="#a4a9ad" stroke-width="0.8" opacity="0.5"/><path d="M931.5 183.2h20.0" stroke="#a4a9ad" stroke-width="0.8" stroke-dasharray="5 1 3 1 1 1 4 1" opacity="0.5"/><path d="M931.5 185.1h30.0" stroke="#a4a9ad" stroke-width="0.8" stroke-dasharray="6 1 2 1 3 1" opacity="0.5"/><path d="M934.0 187.0h26.0" stroke="#a4a9ad" stroke-width="0.8" stroke-dasharray="2 1 7 1 4 1" opacity="0.5"/><path d="M934.0 188.9h2.0" stroke="#a4a9ad" stroke-width="0.8" opacity="0.5"/><path d="M936.5 190.8h20.0" stroke="#a4a9ad" stroke-width="0.8" stroke-dasharray="4 1 2 1 6 1 3 1" opacity="0.5"/><path d="M934.0 192.7h2.0" stroke="#a4a9ad" stroke-width="0.8" opacity="0.5"/><path d="M931.5 194.6h2.0" stroke="#a4a9ad" stroke-width="0.8" opacity="0.5"/><path d="M931.5 198.4h28.0" stroke="#a4a9ad" stroke-width="0.8" stroke-dasharray="6 1 2 1 3 1" opacity="0.5"/><path d="M931.5 200.3h2.0" stroke="#a4a9ad" stroke-width="0.8" opacity="0.5"/><path d="M934.0 202.2h20.0" stroke="#a4a9ad" stroke-width="0.8" stroke-dasharray="5 1 3 1 1 1 4 1" opacity="0.5"/><path d="M934.0 204.1h30.0" stroke="#a4a9ad" stroke-width="0.8" stroke-dasharray="6 1 2 1 3 1" opacity="0.5"/><path d="M936.5 206.0h34.0" stroke="#a4a9ad" stroke-width="0.8" stroke-dasharray="2 1 7 1 4 1" opacity="0.5"/><path d="M936.5 207.9h2.0" stroke="#a4a9ad" stroke-width="0.8" opacity="0.5"/><path d="M939.0 209.8h20.0" stroke="#a4a9ad" stroke-width="0.8" stroke-dasharray="4 1 2 1 6 1 3 1" opacity="0.5"/><path d="M936.5 211.7h2.0" stroke="#a4a9ad" stroke-width="0.8" opacity="0.5"/><path d="M934.0 213.6h2.0" stroke="#a4a9ad" stroke-width="0.8" opacity="0.5"/><path d="M931.5 215.5h2.0" stroke="#a4a9ad" stroke-width="0.8" opacity="0.5"/><path d="M929.0 217.4h2.0" stroke="#a4a9ad" stroke-width="0.8" opacity="0.5"/><path d="M929.0 219.3h26.0" stroke="#a4a9ad" stroke-width="0.8" stroke-dasharray="6 1 2 1 3 1" opacity="0.5"/><path d="M929.0 221.2h30.0" stroke="#a4a9ad" stroke-width="0.8" stroke-dasharray="3 1 5 1 2 1" opacity="0.5"/><path d="M929.0 223.1h2.0" stroke="#a4a9ad" stroke-width="0.8" opacity="0.5"/><path d="M931.5 225.0h18.0" stroke="#a4a9ad" stroke-width="0.8" stroke-dasharray="6 1 2 1 3 1" opacity="0.5"/><path d="M931.5 226.9h22.0" stroke="#a4a9ad" stroke-width="0.8" stroke-dasharray="3 1 5 1 2 1" opacity="0.5"/><path d="M931.5 228.8h12.0" stroke="#a4a9ad" stroke-width="0.8" stroke-dasharray="3 1 5 1 2 1" opacity="0.5"/><path d="M929.0 230.7h2.0" stroke="#a4a9ad" stroke-width="0.8" opacity="0.5"/><path d="M929.0 232.6h24.0" stroke="#a4a9ad" stroke-width="0.8" stroke-dasharray="6 1 2 1 3 1" opacity="0.5"/><path d="M929.0 234.5h22.0" stroke="#a4a9ad" stroke-width="0.8" stroke-dasharray="3 1 5 1 2 1" opacity="0.5"/><path d="M929.0 236.4h12.0" stroke="#a4a9ad" stroke-width="0.8" stroke-dasharray="4 1 2 1 6 1 3 1" opacity="0.5"/><path d="M929.0 238.3h2.0" stroke="#a4a9ad" stroke-width="0.8" opacity="0.5"/><path d="M931.5 240.2h16.0" stroke="#a4a9ad" stroke-width="0.8" stroke-dasharray="6 1 2 1 3 1" opacity="0.5"/><path d="M929.0 242.1h2.0" stroke="#a4a9ad" stroke-width="0.8" opacity="0.5"/><path d="M929.0 244.0h26.0" stroke="#a4a9ad" stroke-width="0.8" stroke-dasharray="5 1 3 1 1 1 4 1" opacity="0.5"/><path d="M929.0 245.9h18.0" stroke="#a4a9ad" stroke-width="0.8" stroke-dasharray="6 1 2 1 3 1" opacity="0.5"/><path d="M929.0 247.8h10.0" stroke="#a4a9ad" stroke-width="0.8" stroke-dasharray="3 1 5 1 2 1" opacity="0.5"/><path d="M926.5 249.7h2.0" stroke="#a4a9ad" stroke-width="0.8" opacity="0.5"/><path d="M926.5 255.4h2.0" stroke="#a4a9ad" stroke-width="0.8" opacity="0.5"/><path d="M926.5 257.3h8.0" stroke="#a4a9ad" stroke-width="0.8" stroke-dasharray="4 1 2 1 6 1 3 1" opacity="0.5"/><path d="M926.5 259.2h6.0" stroke="#a4a9ad" stroke-width="0.8" opacity="0.5"/><path d="M929.0 261.1h24.0" stroke="#a4a9ad" stroke-width="0.8" stroke-dasharray="3 1 5 1 2 1" opacity="0.5"/><path d="M929.0 263.0h2.0" stroke="#a4a9ad" stroke-width="0.8" opacity="0.5"/><path d="M931.5 264.9h16.0" stroke="#a4a9ad" stroke-width="0.8" stroke-dasharray="6 1 2 1 3 1" opacity="0.5"/><path d="M929.0 266.8h2.0" stroke="#a4a9ad" stroke-width="0.8" opacity="0.5"/><path d="M926.5 268.7h2.0" stroke="#a4a9ad" stroke-width="0.8" opacity="0.5"/><path d="M926.5 272.4h2.0" stroke="#a4a9ad" stroke-width="0.8" opacity="0.5"/><path d="M926.5 274.3h8.0" stroke="#a4a9ad" stroke-width="0.8" stroke-dasharray="2 1 7 1 4 1" opacity="0.5"/><path d="M926.5 276.2h6.0" stroke="#a4a9ad" stroke-width="0.8" opacity="0.5"/><path d="M929.0 278.1h22.0" stroke="#a4a9ad" stroke-width="0.8" stroke-dasharray="4 1 2 1 6 1 3 1" opacity="0.5"/><path d="M926.5 280.0h2.0" stroke="#a4a9ad" stroke-width="0.8" opacity="0.5"/><path d="M929.0 281.9h18.0" stroke="#a4a9ad" stroke-width="0.8" stroke-dasharray="2 1 7 1 4 1" opacity="0.5"/><path d="M929.0 283.8h16.0" stroke="#a4a9ad" stroke-width="0.8" stroke-dasharray="5 1 3 1 1 1 4 1" opacity="0.5"/><path d="M929.0 285.7h28.0" stroke="#a4a9ad" stroke-width="0.8" stroke-dasharray="5 1 3 1 1 1 4 1" opacity="0.5"/><path d="M926.5 287.6h2.0" stroke="#a4a9ad" stroke-width="0.8" opacity="0.5"/><path d="M926.5 292.4h2.0" stroke="#a4a9ad" stroke-width="0.8" opacity="0.5"/><path d="M926.5 294.3h10.0" stroke="#a4a9ad" stroke-width="0.8" stroke-dasharray="2 1 7 1 4 1" opacity="0.5"/><path d="M926.5 296.2h6.0" stroke="#a4a9ad" stroke-width="0.8" opacity="0.5"/><path d="M929.0 298.1h40.0" stroke="#a4a9ad" stroke-width="0.8" stroke-dasharray="4 1 2 1 6 1 3 1" opacity="0.5"/><path d="M926.5 300.0h2.0" stroke="#a4a9ad" stroke-width="0.8" opacity="0.5"/><path d="M929.0 301.9h18.0" stroke="#a4a9ad" stroke-width="0.8" stroke-dasharray="2 1 7 1 4 1" opacity="0.5"/><path d="M929.0 303.8h12.0" stroke="#a4a9ad" stroke-width="0.8" stroke-dasharray="5 1 3 1 1 1 4 1" opacity="0.5"/><path d="M926.5 305.7h2.0" stroke="#a4a9ad" stroke-width="0.8" opacity="0.5"/><path d="M926.5 310.4h2.0" stroke="#a4a9ad" stroke-width="0.8" opacity="0.5"/><path d="M926.5 312.3h8.0" stroke="#a4a9ad" stroke-width="0.8" stroke-dasharray="4 1 2 1 6 1 3 1" opacity="0.5"/><path d="M926.5 314.2h6.0" stroke="#a4a9ad" stroke-width="0.8" opacity="0.5"/><path d="M929.0 316.1h60.0" stroke="#a4a9ad" stroke-width="0.8" stroke-dasharray="3 1 5 1 2 1" opacity="0.5"/><path d="M926.5 318.0h2.0" stroke="#a4a9ad" stroke-width="0.8" opacity="0.5"/><path d="M926.5 322.4h2.0" stroke="#a4a9ad" stroke-width="0.8" opacity="0.5"/><path d="M926.5 324.3h10.0" stroke="#a4a9ad" stroke-width="0.8" stroke-dasharray="2 1 7 1 4 1" opacity="0.5"/><path d="M926.5 326.2h6.0" stroke="#a4a9ad" stroke-width="0.8" opacity="0.5"/><path d="M929.0 328.1h24.0" stroke="#a4a9ad" stroke-width="0.8" stroke-dasharray="4 1 2 1 6 1 3 1" opacity="0.5"/><path d="M926.5 330.0h2.0" stroke="#a4a9ad" stroke-width="0.8" opacity="0.5"/><path d="M929.0 331.9h44.0" stroke="#a4a9ad" stroke-width="0.8" stroke-dasharray="2 1 7 1 4 1" opacity="0.5"/><path d="M929.0 333.8h52.0" stroke="#a4a9ad" stroke-width="0.8" stroke-dasharray="5 1 3 1 1 1 4 1" opacity="0.5"/><path d="M929.0 335.7h20.0" stroke="#a4a9ad" stroke-width="0.8" stroke-dasharray="5 1 3 1 1 1 4 1" opacity="0.5"/><path d="M926.5 337.6h2.0" stroke="#a4a9ad" stroke-width="0.8" opacity="0.5"/><path d="M926.5 342.4h2.0" stroke="#a4a9ad" stroke-width="0.8" opacity="0.5"/><path d="M926.5 344.3h12.0" stroke="#a4a9ad" stroke-width="0.8" stroke-dasharray="2 1 7 1 4 1" opacity="0.5"/><path d="M926.5 346.2h6.0" stroke="#a4a9ad" stroke-width="0.8" opacity="0.5"/><path d="M929.0 348.1h18.0" stroke="#a4a9ad" stroke-width="0.8" stroke-dasharray="4 1 2 1 6 1 3 1" opacity="0.5"/><path d="M926.5 350.0h2.0" stroke="#a4a9ad" stroke-width="0.8" opacity="0.5"/><path d="M929.0 351.9h50.0" stroke="#a4a9ad" stroke-width="0.8" stroke-dasharray="2 1 7 1 4 1" opacity="0.5"/><path d="M929.0 353.8h22.0" stroke="#a4a9ad" stroke-width="0.8" stroke-dasharray="5 1 3 1 1 1 4 1" opacity="0.5"/><path d="M926.5 355.7h2.0" stroke="#a4a9ad" stroke-width="0.8" opacity="0.5"/><path d="M926.5 360.4h2.0" stroke="#a4a9ad" stroke-width="0.8" opacity="0.5"/><path d="M926.5 362.3h10.0" stroke="#a4a9ad" stroke-width="0.8" stroke-dasharray="4 1 2 1 6 1 3 1" opacity="0.5"/><path d="M926.5 364.2h6.0" stroke="#a4a9ad" stroke-width="0.8" opacity="0.5"/><path d="M929.0 366.1h48.0" stroke="#a4a9ad" stroke-width="0.8" stroke-dasharray="3 1 5 1 2 1" opacity="0.5"/><path d="M926.5 368.0h2.0" stroke="#a4a9ad" stroke-width="0.8" opacity="0.5"/><path d="M929.0 369.9h50.0" stroke="#a4a9ad" stroke-width="0.8" stroke-dasharray="4 1 2 1 6 1 3 1" opacity="0.5"/><path d="M929.0 371.8h30.0" stroke="#a4a9ad" stroke-width="0.8" stroke-dasharray="2 1 7 1 4 1" opacity="0.5"/><path d="M929.0 373.7h16.0" stroke="#a4a9ad" stroke-width="0.8" stroke-dasharray="2 1 7 1 4 1" opacity="0.5"/><path d="M926.5 375.6h2.0" stroke="#a4a9ad" stroke-width="0.8" opacity="0.5"/><path d="M926.5 381.4h2.0" stroke="#a4a9ad" stroke-width="0.8" opacity="0.5"/><path d="M926.5 383.3h10.0" stroke="#a4a9ad" stroke-width="0.8" stroke-dasharray="6 1 2 1 3 1" opacity="0.5"/><path d="M926.5 385.2h6.0" stroke="#a4a9ad" stroke-width="0.8" opacity="0.5"/><path d="M929.0 387.1h20.0" stroke="#a4a9ad" stroke-width="0.8" stroke-dasharray="5 1 3 1 1 1 4 1" opacity="0.5"/><path d="M926.5 389.0h2.0" stroke="#a4a9ad" stroke-width="0.8" opacity="0.5"/><path d="M929.0 390.9h24.0" stroke="#a4a9ad" stroke-width="0.8" stroke-dasharray="6 1 2 1 3 1" opacity="0.5"/><path d="M929.0 392.8h14.0" stroke="#a4a9ad" stroke-width="0.8" stroke-dasharray="3 1 5 1 2 1" opacity="0.5"/><path d="M926.5 394.7h2.0" stroke="#a4a9ad" stroke-width="0.8" opacity="0.5"/><path d="M931.5 396.6h20.0" stroke="#a4a9ad" stroke-width="0.8" stroke-dasharray="6 1 2 1 3 1" opacity="0.5"/><path d="M926.5 402.4h2.0" stroke="#a4a9ad" stroke-width="0.8" opacity="0.5"/><path d="M926.5 404.3h8.0" stroke="#a4a9ad" stroke-width="0.8" stroke-dasharray="2 1 7 1 4 1" opacity="0.5"/><path d="M926.5 406.2h6.0" stroke="#a4a9ad" stroke-width="0.8" opacity="0.5"/><path d="M929.0 408.1h24.0" stroke="#a4a9ad" stroke-width="0.8" stroke-dasharray="4 1 2 1 6 1 3 1" opacity="0.5"/><path d="M926.5 410.0h2.0" stroke="#a4a9ad" stroke-width="0.8" opacity="0.5"/><path d="M929.0 411.9h18.0" stroke="#a4a9ad" stroke-width="0.8" stroke-dasharray="2 1 7 1 4 1" opacity="0.5"/><path d="M929.0 413.8h12.0" stroke="#a4a9ad" stroke-width="0.8" stroke-dasharray="5 1 3 1 1 1 4 1" opacity="0.5"/><path d="M926.5 415.7h2.0" stroke="#a4a9ad" stroke-width="0.8" opacity="0.5"/><path d="M926.5 420.4h2.0" stroke="#a4a9ad" stroke-width="0.8" opacity="0.5"/><path d="M926.5 422.3h10.0" stroke="#a4a9ad" stroke-width="0.8" stroke-dasharray="4 1 2 1 6 1 3 1" opacity="0.5"/><path d="M926.5 424.2h6.0" stroke="#a4a9ad" stroke-width="0.8" opacity="0.5"/><path d="M929.0 426.1h20.0" stroke="#a4a9ad" stroke-width="0.8" stroke-dasharray="3 1 5 1 2 1" opacity="0.5"/><path d="M929.0 428.0h2.0" stroke="#a4a9ad" stroke-width="0.8" opacity="0.5"/><path d="M931.5 429.9h30.0" stroke="#a4a9ad" stroke-width="0.8" stroke-dasharray="6 1 2 1 3 1" opacity="0.5"/><path d="M931.5 431.8h2.0" stroke="#a4a9ad" stroke-width="0.8" opacity="0.5"/><path d="M934.0 433.7h22.0" stroke="#a4a9ad" stroke-width="0.8" stroke-dasharray="2 1 7 1 4 1" opacity="0.5"/><path d="M934.0 435.6h14.0" stroke="#a4a9ad" stroke-width="0.8" stroke-dasharray="5 1 3 1 1 1 4 1" opacity="0.5"/><path d="M931.5 437.5h2.0" stroke="#a4a9ad" stroke-width="0.8" opacity="0.5"/><path d="M929.0 439.4h2.0" stroke="#a4a9ad" stroke-width="0.8" opacity="0.5"/><path d="M926.5 444.4h2.0" stroke="#a4a9ad" stroke-width="0.8" opacity="0.5"/><path d="M926.5 446.3h8.0" stroke="#a4a9ad" stroke-width="0.8" stroke-dasharray="5 1 3 1 1 1 4 1" opacity="0.5"/><path d="M929.0 448.2h24.0" stroke="#a4a9ad" stroke-width="0.8" stroke-dasharray="4 1 2 1 6 1 3 1" opacity="0.5"/><path d="M929.0 450.1h2.0" stroke="#a4a9ad" stroke-width="0.8" opacity="0.5"/><path d="M931.5 452.0h20.0" stroke="#a4a9ad" stroke-width="0.8" stroke-dasharray="3 1 5 1 2 1" opacity="0.5"/><path d="M931.5 453.9h26.0" stroke="#a4a9ad" stroke-width="0.8" stroke-dasharray="4 1 2 1 6 1 3 1" opacity="0.5"/><path d="M931.5 455.8h22.0" stroke="#a4a9ad" stroke-width="0.8" stroke-dasharray="4 1 2 1 6 1 3 1" opacity="0.5"/><path d="M931.5 457.7h18.0" stroke="#a4a9ad" stroke-width="0.8" stroke-dasharray="2 1 7 1 4 1" opacity="0.5"/><path d="M931.5 459.6h2.0" stroke="#a4a9ad" stroke-width="0.8" opacity="0.5"/><path d="M931.5 461.5h40.0" stroke="#a4a9ad" stroke-width="0.8" stroke-dasharray="5 1 3 1 1 1 4 1" opacity="0.5"/><path d="M931.5 463.4h2.0" stroke="#a4a9ad" stroke-width="0.8" opacity="0.5"/><path d="M934.0 465.3h18.0" stroke="#a4a9ad" stroke-width="0.8" stroke-dasharray="2 1 7 1 4 1" opacity="0.5"/><path d="M931.5 467.2h2.0" stroke="#a4a9ad" stroke-width="0.8" opacity="0.5"/><path d="M929.0 471.4h2.0" stroke="#a4a9ad" stroke-width="0.8" opacity="0.5"/><path d="M929.0 473.3h22.0" stroke="#a4a9ad" stroke-width="0.8" stroke-dasharray="4 1 2 1 6 1 3 1" opacity="0.5"/><path d="M929.0 475.2h2.0" stroke="#a4a9ad" stroke-width="0.8" opacity="0.5"/><path d="M931.5 477.1h50.0" stroke="#a4a9ad" stroke-width="0.8" stroke-dasharray="3 1 5 1 2 1" opacity="0.5"/><path d="M931.5 479.0h2.0" stroke="#a4a9ad" stroke-width="0.8" opacity="0.5"/><path d="M934.0 480.9h20.0" stroke="#a4a9ad" stroke-width="0.8" stroke-dasharray="6 1 2 1 3 1" opacity="0.5"/><path d="M934.0 482.8h16.0" stroke="#a4a9ad" stroke-width="0.8" stroke-dasharray="3 1 5 1 2 1" opacity="0.5"/><path d="M931.5 484.7h2.0" stroke="#a4a9ad" stroke-width="0.8" opacity="0.5"/><path d="M931.5 486.6h46.0" stroke="#a4a9ad" stroke-width="0.8" stroke-dasharray="6 1 2 1 3 1" opacity="0.5"/><path d="M929.0 488.5h2.0" stroke="#a4a9ad" stroke-width="0.8" opacity="0.5"/><path d="M931.5 490.4h20.0" stroke="#a4a9ad" stroke-width="0.8" stroke-dasharray="3 1 5 1 2 1" opacity="0.5"/><path d="M926.5 494.4h2.0" stroke="#a4a9ad" stroke-width="0.8" opacity="0.5"/><path d="M926.5 496.3h8.0" stroke="#a4a9ad" stroke-width="0.8" stroke-dasharray="5 1 3 1 1 1 4 1" opacity="0.5"/><path d="M929.0 498.2h26.0" stroke="#a4a9ad" stroke-width="0.8" stroke-dasharray="4 1 2 1 6 1 3 1" opacity="0.5"/><path d="M929.0 500.1h2.0" stroke="#a4a9ad" stroke-width="0.8" opacity="0.5"/><path d="M931.5 502.0h44.0" stroke="#a4a9ad" stroke-width="0.8" stroke-dasharray="3 1 5 1 2 1" opacity="0.5"/><path d="M931.5 503.9h2.0" stroke="#a4a9ad" stroke-width="0.8" opacity="0.5"/><path d="M934.0 505.8h14.0" stroke="#a4a9ad" stroke-width="0.8" stroke-dasharray="6 1 2 1 3 1" opacity="0.5"/><path d="M931.5 507.7h2.0" stroke="#a4a9ad" stroke-width="0.8" opacity="0.5"/><path d="M929.0 509.6h2.0" stroke="#a4a9ad" stroke-width="0.8" opacity="0.5"/><path d="M926.5 513.4h2.0" stroke="#a4a9ad" stroke-width="0.8" opacity="0.5"/><path d="M926.5 515.3h10.0" stroke="#a4a9ad" stroke-width="0.8" stroke-dasharray="3 1 5 1 2 1" opacity="0.5"/><path d="M929.0 517.2h30.0" stroke="#a4a9ad" stroke-width="0.8" stroke-dasharray="5 1 3 1 1 1 4 1" opacity="0.5"/><path d="M929.0 519.1h26.0" stroke="#a4a9ad" stroke-width="0.8" stroke-dasharray="6 1 2 1 3 1" opacity="0.5"/><path d="M929.0 521.0h2.0" stroke="#a4a9ad" stroke-width="0.8" opacity="0.5"/><path d="M926.5 522.9h2.0" stroke="#a4a9ad" stroke-width="0.8" opacity="0.5"/><path d="M929.0 524.8h20.0" stroke="#a4a9ad" stroke-width="0.8" stroke-dasharray="4 1 2 1 6 1 3 1" opacity="0.5"/></svg>
</div>
<div id="crumbs" class="abs"><span style="left:47.5px">DemoOperateController</span><span style="left:143.5px;color:#6f7274;font-size:7px">›</span><span style="left:152.5px">add()</span></div>
<div id="tools" class="abs">
<div class="tw" style="left:34px;font-size:8.25px"><u>6</u>: TODO</div>
<div class="tw" style="left:95px;font-size:8.68px"><u>9</u>: Version Control</div>
<div class="tw" style="left:192.6px;font-size:9px">Terminal</div>
<div class="tw" style="left:254.4px;font-size:8.06px">Java Enterprise</div>
<div class="tw" style="left:338px;font-size:8.6px">Spring</div>
<div class="tw" style="left:1020.4px;font-size:7.9px">Event Log</div>
<svg style="left:21.50px;top:3.50px" width="10" height="10" viewBox="0 0 10 10"><circle cx="3" cy="3" r="2.6" fill="#e4e4e4"/><path d="M2 3l.8.8L4.3 2" stroke="#555" stroke-width=".7" fill="none"/><rect x="3.5" y="4.5" width="6" height="5" rx=".6" fill="#d9a343"/><path d="M4.6 6.2h3.8M4.6 7.8h3.8" stroke="#7a5a1c" stroke-width=".7"/></svg>
<svg style="left:82.00px;top:3.50px" width="10" height="10" viewBox="0 0 10 10"><path d="M2.2 2.2L5 8.5 8 2.5" stroke="#aeb3b6" stroke-width="1" fill="none"/><circle cx="2.2" cy="2.2" r="2" fill="#4a9fd6"/><circle cx="8" cy="2.5" r="1.7" fill="#9aa0a4"/><circle cx="5" cy="8.3" r="1.7" fill="#9aa0a4"/></svg>
<svg style="left:180.00px;top:3.50px" width="10" height="10" viewBox="0 0 10 10"><rect x="0" y="0" width="10" height="9.5" fill="#17191a" stroke="#8a8d8f" stroke-width=".6"/><path d="M1.5 3.5l2 1.6-2 1.6" stroke="#d0d0d0" stroke-width=".8" fill="none"/><path d="M4.5 7h2.6" stroke="#d0d0d0" stroke-width=".8"/></svg>
<svg style="left:242.50px;top:2.50px" width="10" height="11" viewBox="0 0 10 11"><rect x="0" y="0" width="8" height="9" fill="#4a9fd6"/><rect x="3" y="4.5" width="7" height="6.5" fill="#d9a343"/><path d="M1.2 2h5.6M1.2 3.6h5.6" stroke="#2a5d80" stroke-width=".7"/></svg>
<svg style="left:325.50px;top:3.00px" width="10" height="10" viewBox="0 0 10 10"><path d="M0.5 8.5C0.5 3.5 3.5 1 9.6 0.4 9.8 5.5 7 9 2.8 8.6 3.6 6 5.4 4.4 7.4 3.4 4.6 4.2 2.2 6 1.3 9.4z" fill="#6db33f"/></svg>
<svg style="left:1007.00px;top:2.20px" width="11" height="11" viewBox="0 0 11 11"><path d="M5.4 0.3a5 4.6 0 1 1-3 8.3L0.6 10l.6-2.6A4.6 4.6 0 0 1 5.4.3z" fill="#d9584a"/><text x="5.4" y="6.8" font-size="6" font-weight="bold" text-anchor="middle" fill="#fff" font-family="Liberation Sans,sans-serif">1</text></svg>
</div>
<div id="status" class="abs">
<svg style="left:3.00px;top:3.00px" width="11" height="9" viewBox="0 0 11 9"><rect x="0.5" y="0.5" width="10" height="8" fill="none" stroke="#8d9194" stroke-width="1"/><rect x="0.5" y="6.6" width="10" height="1.9" fill="#8d9194"/></svg>
<span style="left:21.5px;font-size:8.55px">Translate Error: 翻译失败: AppKey无效 - 设置 // Copy to Clipboard (a minute ago)</span>
<span style="left:869.5px;font-size:8.66px">139:32</span>
<span style="left:905px;font-size:8.66px">CRLF<span style="font-size:6px;vertical-align:1px">⬍</span></span>
<span style="left:935.5px;font-size:8.66px">UTF-8<span style="font-size:6px;vertical-align:1px">⬍</span></span>
<span style="left:974px;font-size:8.66px">Git: master <span style="font-size:6px;vertical-align:1px">⬍</span></span>
<svg style="left:1030.50px;top:3.50px" width="9" height="9" viewBox="0 0 9 9"><path d="M1.2 4V2.6a2 2 0 0 1 4 0" fill="none" stroke="#8d9194" stroke-width="1"/><rect x="2.6" y="3.8" width="5.6" height="4.4" rx=".6" fill="#8d9194"/><rect x="4.8" y="5.2" width="1.2" height="1.6" fill="#3c3f41"/></svg>
<svg style="left:1048.00px;top:2.50px" width="10" height="11" viewBox="0 0 10 11"><circle cx="5" cy="3.6" r="3" fill="none" stroke="#7f8386" stroke-width=".9"/><path d="M1.6 3.4h6.8M2 10.5c0-2.6 1.2-3.8 3-3.8s3 1.2 3 3.8z" stroke="#7f8386" stroke-width=".9" fill="none"/></svg>
<svg style="left:1064.50px;top:2.50px" width="10" height="10" viewBox="0 0 10 10"><path d="M9 5A4 4 0 1 1 7.8 2.2" fill="none" stroke="#ea4335" stroke-width="1.8"/><path d="M1.2 6.3A4 4 0 0 0 5 9" fill="none" stroke="#fbbc05" stroke-width="1.8"/><path d="M5 9a4 4 0 0 0 4-4" fill="none" stroke="#34a853" stroke-width="1.8"/><path d="M5 5h4" stroke="#4285f4" stroke-width="1.8"/></svg>
</div>
<svg style="left:0;top:0" width="1080" height="598" viewBox="0 0 1080 598"><path d="M999.5 36.8L772 154.8" stroke="#f5aa1c" stroke-width="3.3" fill="none"/><path d="M755.3 163.2L770 149 776 159.9z" fill="#f5aa1c"/><rect x="1004.4" y="10.4" width="63.8" height="29.1" rx="3.6" fill="none" stroke="#f5aa1c" stroke-width="2.6"/></svg>
<div id="dlgsh" class="abs"></div>
<div id="dlg" class="abs">
<div id="dtitle" class="abs"><div class="tt">Translation</div>
<div class="dot" style="left:4.3px;background:#fc5f57;border:0.5px solid #e0443e"></div>
<div class="dot" style="left:15.8px;background:#d4d4d4;border:0.5px solid #c4c4c4"></div>
<div class="dot" style="left:27.3px;background:#2fc840;border:0.5px solid #1fa92f"></div>
</div>
<div class="combo" style="left:8px;top:19.2px;width:95px"><span style="left:4px">自动检测</span><div style="right:0;top:0;width:13.5px;height:15.3px;background:#3e4143;border-left:1px solid #4d5153"></div><div class="ard" style="right:3.6px;top:5.6px;border-left-width:3px;border-right-width:3px;border-top:4.6px solid #c0c0c0"></div></div>
<div class="btn" style="left:191.5px;top:19.2px;width:52px"></div>
<svg style="left:210.00px;top:19.90px" width="16" height="16" viewBox="0 0 16 16"><path d="M6.6 5.8L10.6 3v1.9h4.2v1.9h-4.2v1.8z" fill="#3b78a8"/><path d="M6.4 5.8L10.6 2.9v5.8z" fill="#55b8ea"/><path d="M9.4 10.4L5.4 7.6v1.9H1.6v1.9h3.8v1.8z" fill="#3b78a8"/><path d="M9.6 10.4L5.4 7.5v5.8z" fill="#55b8ea"/></svg>
<div class="combo" style="left:253px;top:19.2px;width:95px"><span style="left:4px">英语</span><div style="right:0;top:0;width:13.5px;height:15.3px;background:#3e4143;border-left:1px solid #4d5153"></div><div class="ard" style="right:3.6px;top:5.6px;border-left-width:3px;border-right-width:3px;border-top:4.6px solid #c0c0c0"></div></div>
<div class="btn" style="left:436.5px;top:19.2px;width:52px">翻译</div>
<div class="ta" style="left:6px;top:41.5px;width:239.3px;height:190.5px">
<div style="left:3.2px;top:1.5px;font-family:'Liberation Sans','Noto Sans CJK SC',sans-serif;font-size:10px;line-height:16px">苹果公司真的很厉害</div>
<div style="left:0;top:174px;width:237.3px;height:1px;background:#3a3d3f"></div>
<svg style="left:5.50px;top:178.50px" width="10" height="9" viewBox="0 0 10 9"><path d="M0 2.8h2.2L5 0.3v8.4L2.2 6.2H0z" fill="#aeb2b5"/><path d="M6.3 2.6a2.6 2.6 0 0 1 0 3.8M7.6 1a4.6 4.6 0 0 1 0 7" stroke="#aeb2b5" stroke-width=".9" fill="none"/></svg>
<svg style="left:21.00px;top:178.50px" width="10" height="9" viewBox="0 0 10 9"><path d="M0.5 0.8h8.5M4.7 0.8v3" stroke="#aeb2b5" stroke-width="1.1" fill="none"/><path d="M1 3l6.5 5.5M7.5 3L1 8.5" stroke="#aeb2b5" stroke-width="1"/></svg>
</div>
<div class="ta" style="left:251px;top:41.5px;width:239.6px;height:190.5px">
<div style="left:3.2px;top:1.5px;font-family:'DejaVu Sans','Liberation Sans','Noto Sans CJK SC',sans-serif;font-size:9.67px;line-height:16px">Apple is really amazing</div>
<div style="left:0;top:174px;width:237.6px;height:1px;background:#3a3d3f"></div>
<svg style="left:5.50px;top:178.50px" width="10" height="9" viewBox="0 0 10 9"><path d="M0 2.8h2.2L5 0.3v8.4L2.2 6.2H0z" fill="#aeb2b5"/><path d="M6.3 2.6a2.6 2.6 0 0 1 0 3.8M7.6 1a4.6 4.6 0 0 1 0 7" stroke="#aeb2b5" stroke-width=".9" fill="none"/></svg>
<svg style="left:21.00px;top:178.00px" width="10" height="10" viewBox="0 0 10 10"><rect x="0.5" y="0.5" width="5.8" height="7" fill="none" stroke="#aeb2b5" stroke-width="1"/><rect x="3" y="2.6" width="6.4" height="7" fill="#aeb2b5"/><path d="M4.3 4.6h3.8M4.3 6.2h3.8M4.3 7.8h3.8" stroke="#45494a" stroke-width=".7"/></svg>
</div>
</div>
</div></body></html>
